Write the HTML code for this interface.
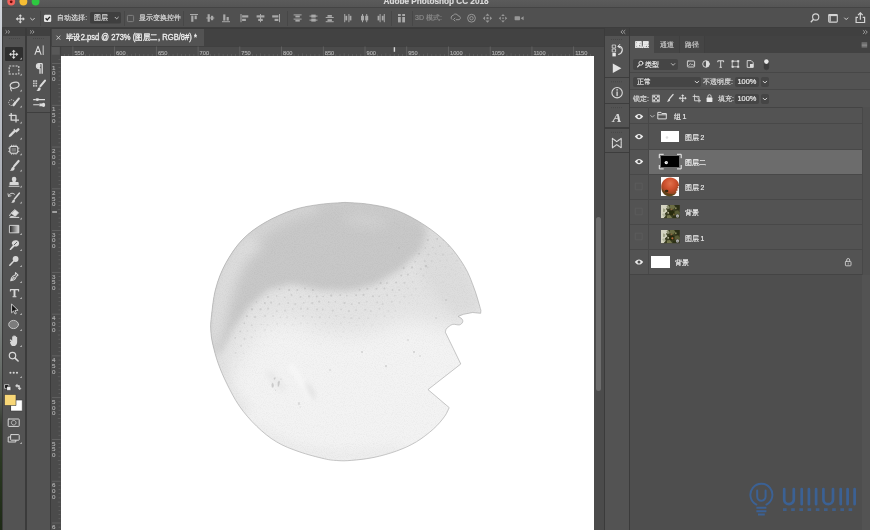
<!DOCTYPE html>
<html lang="zh">
<head>
<meta charset="utf-8">
<title>Adobe Photoshop CC 2018</title>
<style>
*{margin:0;padding:0;box-sizing:border-box}
html,body{width:870px;height:530px;overflow:hidden;background:#535353}
body{font-family:"Liberation Sans",sans-serif;font-size:7px;color:#d8d8d8;position:relative;line-height:1}
.a{position:absolute}
.t{position:absolute;white-space:nowrap;line-height:10px;height:10px;opacity:.999;will-change:opacity;-webkit-text-stroke:.18px currentColor}
svg{position:absolute;overflow:visible}
.t i{display:inline-block;width:1em;text-align:center;font-style:normal}
.rl{font-size:5.7px;color:#b0b0b0;line-height:8px;height:8px;-webkit-text-stroke:.15px #b0b0b0}
.rv{font-size:6.2px;color:#b0b0b0;line-height:6px;height:6px;-webkit-text-stroke:.15px #b0b0b0}
/* ---------- frame ---------- */
#deskL{left:0;top:0;width:2px;height:530px;background:linear-gradient(#d2d6dc 0,#c6cad1 60px,#a8acb4 200px,#7c8280 320px,#5a5f5a 395px,#343b30 425px,#2a3822 460px,#1e2a16 530px)}
#titlebar{left:2px;top:0;width:868px;height:8px;background:linear-gradient(#5b5b5b,#545454)}
#titleline{left:2px;top:7px;width:868px;height:1px;background:#444}
#optbar{left:2px;top:8px;width:868px;height:20px;background:#505050}
#optline{left:2px;top:27px;width:868px;height:1px;background:#3d3d3d}
#well{left:1.5px;top:28px;width:868px;height:502px;background:#3b3b3b}
/* left tool columns */
#tc1h{left:3px;top:28px;width:22px;height:8px;background:#404040}
#tc1{left:3px;top:36px;width:22px;height:494px;background:#535353}
#tc2h{left:27px;top:28px;width:22.6px;height:8px;background:#404040}
#tc2{left:27px;top:36px;width:22.6px;height:494px;background:#535353}
#tc2line{left:27px;top:112px;width:22.6px;height:1px;background:#3e3e3e}
/* document */
#tabstrip{left:51.3px;top:28.500px;width:552.7px;height:17.500px;background:#424242}
#tab{left:51.600px;top:28.700px;width:152.900px;height:17.300px;background:#535353}
#hruler{left:51.3px;top:46px;width:552.7px;height:10px;background:#4b4b4b}
#vruler{left:51.3px;top:56px;width:9.7px;height:474px;background:#4b4b4b}
#canvas{left:61px;top:56px;width:533px;height:474px;background:#fff}
#vscroll{left:594px;top:56px;width:10px;height:474px;background:#4b4b4b}
#vthumb{left:596px;top:217px;width:5px;height:174px;background:#6c6c6c;border-radius:2.5px}
/* right icon column */
#ich{left:605px;top:28px;width:24px;height:8px;background:#404040}
#ic{left:605px;top:36px;width:24px;height:494px;background:#535353}
.icsep{left:605px;width:24px;height:1.600px;background:#3d3d3d}
/* layers panel */
#lph{left:630px;top:28px;width:240px;height:8px;background:#404040}
#lptabs{left:630px;top:36px;width:240px;height:17px;background:#424242}
#lptab{left:630px;top:36px;width:25px;height:17px;background:#535353}
#lp{left:630px;top:53px;width:240px;height:477px;background:#535353}
.hl{left:630px;width:240px;height:1px;background:#474747}
.dd{background:#454545;border-radius:2px}
.rowline{left:630px;width:232px;height:1px;background:#484848}
#eyecol{left:648px;top:107px;width:1px;height:167px;background:#484848}
#sel{left:648.5px;top:149px;width:213px;height:24.5px;background:#6c6c6c}
#lscroll{left:862px;top:107px;width:8px;height:168px;background:#505050}
.thumb{position:absolute;background:#fff}
.eyebox{position:absolute;width:7px;height:7px;border:1px solid #5f5f5f}
</style>
</head>
<body>
<!-- frame -->
<div class="a" id="well"></div>
<div class="a" id="deskL"></div>
<div class="a" id="titlebar"></div>
<div class="a" id="titleline"></div>
<div class="a" id="optbar"></div>
<div class="a" id="optline"></div>

<!-- title -->
<div class="a" id="titlewrap" style="left:380px;top:0;width:112px;height:7.500px;overflow:hidden">
  <div class="t" style="left:3.5px;top:-3px;font-size:8.2px;font-weight:bold;color:#dcdcdc;letter-spacing:0">Adobe Photoshop CC 2018</div>
</div>
<!-- traffic lights -->
<svg class="a" style="left:0;top:0" width="50" height="8" viewBox="0 0 50 8">
  <circle cx="11.2" cy="1.6" r="3.9" fill="#f2635c"/><circle cx="11.2" cy="1.8" r="1.4" fill="#6e0b08"/>
  <circle cx="23.4" cy="1.6" r="3.9" fill="#f6bd34"/>
  <circle cx="35.6" cy="1.6" r="3.9" fill="#2dc840"/>
</svg>

<!-- tool columns -->
<div class="a" id="tc1h"></div><div class="a" id="tc1"></div>
<div class="a" id="tc2h"></div><div class="a" id="tc2"></div><div class="a" id="tc2line"></div>


<!-- tools column 1 -->
<svg style="left:0;top:28px" width="60" height="8" viewBox="0 28 60 8" fill="none" stroke="#b4b4b4" stroke-width=".8"><path d="M5.600 30.300l1.700 1.600-1.700 1.600M8 30.300l1.700 1.600-1.700 1.600M30 30.300l1.700 1.600-1.700 1.600M32.400 30.300l1.700 1.600-1.700 1.600"/></svg>
<div class="a" style="left:8.500px;top:38.400px;width:11px;height:1px;background:repeating-linear-gradient(90deg,#474747 0 1px,transparent 1px 2px)"></div>
<div class="a" style="left:32.500px;top:38.400px;width:11px;height:1px;background:repeating-linear-gradient(90deg,#474747 0 1px,transparent 1px 2px)"></div>
<div class="a" style="left:4.600px;top:47px;width:18.200px;height:13.600px;background:#2f2f2f;border-radius:1px"></div>
<svg style="left:3px;top:36px" width="22" height="420" viewBox="3 36 22 420" fill="none" stroke="#d8d8d8" stroke-width="1" stroke-linecap="round" stroke-linejoin="round">
  <!-- move y=54 -->
  <g transform="translate(13.700 54.300) scale(.86) translate(-14 -54)"><path fill="#e2e2e2" stroke="none" d="M14 48.600l2.200 2.500h-1.600v2.300h2.300v-1.600l2.500 2.200-2.500 2.200v-1.600h-2.300v2.300h1.600l-2.200 2.500-2.200-2.500h1.600v-2.300h-2.300v1.600l-2.500-2.200 2.500-2.200v1.600h2.300v-2.300h-1.600z"/></g>
  <!-- marquee y=70 -->
  <rect x="9.200" y="66" width="9.600" height="8" stroke-dasharray="2 1.200" stroke-linecap="butt" stroke-width="1.100"/>
  <!-- lasso y=86 -->
  <ellipse cx="14.600" cy="85.200" rx="4.500" ry="2.900" transform="rotate(-16 14.600 85.200)" stroke-width="1.250"/><path d="M11 87.400c-.9 1-.4 2.200.4 3.400" stroke-width="1.100"/>
  <!-- quick selection y=102 -->
  <circle cx="11.600" cy="102.600" r="2.900" stroke-dasharray="1.200 .9" stroke-linecap="butt" stroke-width=".9"/><path d="M18.900 98.500l-3.400 4.200" stroke-width="2"/><path d="M15 103.200l-1.400 1.800" stroke-width="2.400"/>
  <!-- crop y=117.5 -->
  <path d="M11.200 113v7.200h7.800M8.800 115.400h7.200v7" stroke-width="1.300" stroke-linecap="butt"/>
  <!-- eyedropper y=133.500 -->
  <path d="M16.400 131.700l-2.200-2.200M15.200 131.300l-4.700 4.700-1.200.4.400-1.200 4.700-4.700" stroke-width="1.200"/><path d="M18.300 129.300l-1.900 1.900" stroke-width="2.500"/>
  <!-- patch y=150.500 -->
  <rect x="9.800" y="146.400" width="8" height="6.800" rx="1.700" stroke-width="1.150"/><rect x="11.600" y="148" width="4.400" height="3.600" fill="#8c8c8c" stroke="none" opacity=".7"/><path d="M11.600 145.200v.8M13.800 145.200v.8M16 145.200v.8M11.600 153.600v.8M13.800 153.600v.8M16 153.600v.8M8.600 148.200h.8M8.600 151.400h.8M18.200 148.200h.8M18.200 151.400h.8" stroke-width=".8"/>
  <!-- brush y=166 -->
  <path d="M18.600 161l-4.600 5.400" stroke-width="2.200"/><path d="M13.400 166.800c-1.100.2-2 1-2.200 2.300-.2.800-.7 1.200-1.400 1.300 1.700.9 3.900.4 4.700-1.200.4-.9.100-1.900-1.100-2.400z" fill="#d8d8d8" stroke="none"/>
  <!-- stamp y=182 -->
  <g transform="translate(0 -1.100)"><path d="M9.200 187.400h9.800" stroke-width="1.100"/><path fill="#d8d8d8" stroke="none" d="M9.500 186v-1.900c0-.5.400-.9.900-.9h2.300c-.2-1.200-.9-1.800-.9-3a2.300 2.300 0 0 1 4.600 0c0 1.200-.7 1.800-.9 3h2.300c.5 0 .9.400.9.900v1.900z"/></g>
  <!-- history brush y=198 -->
  <path d="M19.300 193.200l-4.800 5.800" stroke-width="1.600"/><path d="M14 199.400c-1.100.3-1.600 1-1.800 2-.2.700-.6 1-1.200 1.200 1.500.6 3.200.2 3.800-1.200.4-.8.100-1.600-.8-2z" fill="#d8d8d8" stroke="none"/><path d="M8.600 196.200a3.600 3.600 0 0 1 6-2" stroke-width=".9"/><path d="M8 193.800l.5 2.600 2.500-.6" stroke-width=".9"/>
  <!-- eraser y=213.500 -->
  <path d="M15 209.800l3.600 3-3.400 3.600-3.800-3.200z" fill="#dedede" stroke-width=".8"/><path d="M11.400 213.200l-2 2 1.400 1.400h2.600l1.800-1.400" stroke-width="1"/><path d="M10 217.400h8.800" stroke-width="1"/>
  <!-- gradient y=229 -->
  <rect x="9.800" y="225.400" width="9" height="7.400" fill="url(#gradTool)" stroke-width=".9"/>
  <!-- smudge y=245 -->
  <path d="M17.400 240.600c-2.200-.9-4.600-.2-5.400 1.600-.5 1.200 0 2.300 1 2.800l-3.200 4c-.5.700.4 1.500 1.100.9l3.800-3.600c1.600.7 3.500-.1 4.200-1.900.6-1.500 0-3.200-1.500-3.800z" fill="#d8d8d8" stroke="none"/><path d="M14.200 244.800l2.600-2.600" stroke="#535353" stroke-width=".9"/>
  <!-- dodge y=261 -->
  <circle cx="15.600" cy="259" r="2.900" fill="#d8d8d8" stroke="none"/><path d="M13.600 261.300l-3.800 4" stroke-width="1.500"/>
  <!-- pen y=277 -->
  <g transform="translate(14.400 277) scale(.8) translate(-14.800 -277.200)"><path d="M16.200 271.600l3.200 3.200-2 1.400c-.6 2.200-1.600 3.700-3.600 4.700l-3.600 1 1-3.600c1-2 2.500-3 4.700-3.600zM10.400 281.700l3.400-3.400" stroke-width="1.300"/><circle cx="14.300" cy="277.800" r=".9" fill="#d8d8d8" stroke="none"/></g>
  <!-- T y=293 -->
  <path d="M10.400 291.400v-1.800h8.200v1.800" stroke-width="1.100" stroke-linecap="butt"/><path d="M14.500 289.800v6.600" stroke-width="1.900" stroke-linecap="butt"/><path d="M12.600 296.700h3.800" stroke-width="1.100" stroke-linecap="butt"/>
  <!-- path select y=309 -->
  <path d="M11.600 304.400v8.400l2-1.900 1.400 3.100 1.300-.6-1.400-3.100h2.800z" fill="#141414" stroke="#e6e6e6" stroke-width=".8"/>
  <!-- ellipse y=325 -->
  <ellipse cx="13.600" cy="324.500" rx="4.900" ry="4.100" fill="#7c7c7c" stroke="#c4c4c4" stroke-width="1"/>
  <!-- hand y=341 -->
  <g transform="translate(14.200 341) scale(.92) translate(-13.500 -341)"><path d="M10.200 342.200l-1.300-1.700c-.6-.8.400-1.700 1.200-1l1.200 1.100v-4.100c0-1 1.300-1 1.300 0v-1c0-1 1.400-1 1.400 0v.5c0-1 1.400-1 1.400 0v1c0-.9 1.300-.9 1.300 0v5c0 2-1 3.600-2.400 4.300h-3.200c-1-.6-1.600-1.800-2.200-4.100z" fill="#d8d8d8" stroke="none"/></g>
  <!-- zoom y=357 -->
  <circle cx="12.500" cy="355.600" r="3.200" stroke-width="1.200"/><path d="M15 358.200l3.100 2.800" stroke-width="1.600"/>
  <!-- dots y=373 -->
  <g fill="#d8d8d8" stroke="none"><circle cx="10.400" cy="372.700" r="1.050"/><circle cx="13.700" cy="372.700" r="1.050"/><circle cx="17" cy="372.700" r="1.050"/></g>
  <!-- flyout triangles -->
  <g fill="#bdbdbd" stroke="none">
    <path d="M21.800 57.6v2h-2z"/><path d="M21.800 73.6v2h-2z"/><path d="M21.800 89.6v2h-2z"/><path d="M21.800 105.6v2h-2z"/><path d="M21.800 121.6v2h-2z"/><path d="M21.800 137.6v2h-2z"/><path d="M21.800 153.2v2h-2z"/><path d="M21.800 169.6v2h-2z"/><path d="M21.800 185.6v2h-2z"/><path d="M21.800 201.6v2h-2z"/><path d="M21.800 217.6v2h-2z"/><path d="M21.800 233.0v2h-2z"/><path d="M21.800 249.0v2h-2z"/><path d="M21.800 265.0v2h-2z"/><path d="M21.800 281.0v2h-2z"/><path d="M21.800 297.0v2h-2z"/><path d="M21.800 313.0v2h-2z"/><path d="M21.800 329.0v2h-2z"/><path d="M21.800 345.0v2h-2z"/><path d="M21.800 376.0v2h-2z"/><path d="M21.800 442.0v2h-2z"/>
  </g>
  <!-- default colors / swap -->
  <rect x="5" y="384.600" width="3.800" height="3.800" fill="#111" stroke="#e0e0e0" stroke-width=".7"/><rect x="7" y="386.600" width="3.800" height="3.800" fill="#f0f0f0" stroke="#333" stroke-width=".5"/>
  <path d="M16.800 385.600h2.600v3M15.800 385.600l1.400-1.200v2.400zM19.400 389.600l-1.200-1.400h2.400z" stroke-width=".8" fill="#d8d8d8"/>
  <!-- bg / fg swatches -->
  <rect x="11" y="400" width="11.300" height="11" fill="#ffffff" stroke="#3a3a3a" stroke-width=".6"/>
  <rect x="4.700" y="394.500" width="11.300" height="11" fill="#f8d777" stroke="#3a3a3a" stroke-width=".6"/>
  <!-- quick mask -->
  <rect x="8.200" y="419" width="11" height="7.400" rx=".6" stroke-width="1"/><circle cx="13.700" cy="422.700" r="2.300" stroke-width=".8" stroke-dasharray="1 .8"/>
  <!-- screen mode -->
  <rect x="10.600" y="434.600" width="8.600" height="5.600" rx=".6" stroke-width="1"/><path d="M10.400 437h-2.200v5h7.600v-1.600" stroke-width="1"/>
</svg>
<svg width="0" height="0" style="left:0;top:0"><defs><linearGradient id="gradTool" x1="0" x2="1" y1="0" y2="0"><stop offset="0" stop-color="#2a2a2a"/><stop offset="1" stop-color="#d8d8d8"/></linearGradient></defs></svg>

<!-- tools column 2 -->
<svg style="left:27px;top:36px" width="23" height="80" viewBox="27 36 23 80" fill="none" stroke="#dcdcdc" stroke-width="1" stroke-linecap="round" stroke-linejoin="round">
  <path d="M35 54.400l3-8.200 3 8.200M36.100 51.600h3.800" stroke-width="1.100"/><path d="M43.200 45.400v9.600" stroke-width=".9" stroke-linecap="butt"/>
  <path d="M42.200 63.600h-3.200a2.500 2.500 0 0 0 0 5h1v5.200M42.200 63.600v10.200" stroke-width="1.300" stroke-linecap="butt"/><rect x="37" y="63.600" width="3.400" height="4.600" fill="#dcdcdc" stroke="none" rx="1.600"/>
  <g fill="#c4c4c4" stroke="none"><rect x="33" y="80.200" width="1.700" height="1.700"/><rect x="35.400" y="80.200" width="1.700" height="1.700"/><rect x="33" y="82.600" width="1.700" height="1.700"/><rect x="35.400" y="82.600" width="1.700" height="1.700"/><rect x="33" y="85" width="1.700" height="1.700"/><rect x="35.400" y="85" width="1.700" height="1.700"/></g>
  <path d="M45 80.600l-4.600 5.600" stroke-width="2.100"/><path d="M39.600 87.200c-1 .2-1.800 1-2 2.200-.2.800-.7 1.200-1.400 1.300 1.600.8 3.600.3 4.300-1.200.4-.9.100-1.800-.9-2.300z" fill="#dcdcdc" stroke="none"/>
  <path d="M33.200 99.600h2.400M39 99.600h6M33.200 104.800h6M42.600 104.800h2.400" stroke-width="1.100" stroke-linecap="butt"/><ellipse cx="37.300" cy="99.600" rx="1.900" ry="1.300" fill="#dcdcdc" stroke="none"/><path d="M39.400 103.600h2.600l1.300 1.200v.2l-1.300 1.200h-2.600z" fill="#dcdcdc" stroke="none"/><ellipse cx="43.500" cy="104.900" rx="1.700" ry="2.100" fill="#dcdcdc" stroke="none"/>
</svg>

<!-- document -->
<div class="a" id="tabstrip"></div>
<div class="a" id="tab"></div>
<div class="a" id="hruler"></div>
<div class="a" id="vruler"></div>
<div class="a" id="canvas"></div>

<!-- canvas artwork -->
<svg style="left:61px;top:56px" width="533" height="474" viewBox="61 56 533 474">
  <defs>
    <clipPath id="orangeClip"><path d="M345 202.4C348.9 202.7 359.7 202.9 368.3 204.2C376.9 205.5 387.2 206.9 396.6 210.4C406.1 213.9 416.5 219.8 425.0 225.4C433.5 231.0 441.0 237.0 447.6 243.8C454.2 250.6 460.0 258.9 464.5 266.4C469.0 273.9 471.7 281.7 474.4 289.0C477.1 296.3 479.8 306.8 480.9 310.3L480.7 313.3L472.6 312.5L463.4 314.3L458.1 316.4C458.8 316.8 461.2 318.0 462.0 319.0C462.8 320.0 463.0 321.2 462.6 322.2C462.2 323.2 461.0 324.5 459.4 324.9C457.8 325.2 454.6 324.0 452.8 324.3C451.1 324.6 450.0 325.7 448.9 326.5C447.8 327.3 446.8 328.1 446.2 329.1C445.6 330.1 445.5 331.8 445.4 332.3L460.8 364L428 389.6L449.2 407.6C448.4 409.1 447.3 412.7 444.7 416.3C442.1 419.9 438.1 424.8 433.4 429.0C428.7 433.2 422.5 438.1 416.4 441.8C410.3 445.5 403.7 448.4 396.6 451.0C389.5 453.6 381.6 455.8 374.0 457.4C366.4 459.0 357.3 459.9 351.3 460.4C345.3 460.9 342.5 460.9 338.0 460.6C333.5 460.3 331.0 460.3 324.5 458.8C318.0 457.3 307.0 454.5 299.0 451.7C291.0 448.9 283.5 446.1 276.4 441.8C269.3 437.6 262.7 432.1 256.6 426.2C250.5 420.3 244.6 413.5 239.6 406.4C234.6 399.3 230.4 390.9 226.9 383.8C223.4 376.7 220.8 370.6 218.4 364.0C216.0 357.4 214.0 349.7 212.7 344.0C211.4 338.3 211.0 334.4 210.8 330.0C210.6 325.6 210.5 324.2 211.3 317.4C212.1 310.6 213.2 298.0 215.6 289.0C218.0 280.0 221.0 271.9 225.5 263.6C230.0 255.4 235.9 246.3 242.5 239.5C249.1 232.7 256.5 227.4 265.0 222.5C273.5 217.6 284.2 212.8 293.4 209.8C302.6 206.8 311.4 205.6 320.0 204.4C328.6 203.2 340.8 202.7 345.0 202.4Z"/></clipPath>
    <filter id="b12" x="-30%" y="-30%" width="160%" height="160%"><feGaussianBlur stdDeviation="11"/></filter>
    <filter id="b6" x="-30%" y="-30%" width="160%" height="160%"><feGaussianBlur stdDeviation="6"/></filter>
    <filter id="b4" x="-30%" y="-30%" width="160%" height="160%"><feGaussianBlur stdDeviation="3.800"/></filter>
    <filter id="b05" x="-5%" y="-5%" width="110%" height="110%"><feGaussianBlur stdDeviation=".45"/></filter>
    <filter id="b3" x="-30%" y="-30%" width="160%" height="160%"><feGaussianBlur stdDeviation="2.500"/></filter>
    <filter id="grain" x="0" y="0" width="100%" height="100%">
      <feTurbulence type="fractalNoise" baseFrequency="0.9" numOctaves="2" seed="7" result="n"/>
      <feColorMatrix in="n" type="matrix" values="0 0 0 0 0  0 0 0 0 0  0 0 0 0 0  1.4 0 0 0 -0.55"/>
    </filter>
  </defs>
  <g clip-path="url(#orangeClip)">
    <rect x="200" y="195" width="300" height="275" fill="#f3f3f3"/>
    <!-- dark upper band -->
    <g filter="url(#b12)">
      <path d="M196 380L196 300L212 250L240 215L320 188L400 190L450 220L480 270L492 318L455 330L430 322L405 318L380 328L350 334L318 330L290 318L266 322L248 340L236 362L224 384Z" fill="#e3e3e3" opacity=".95"/>
    </g>
    <g filter="url(#b6)">
      <path d="M412 208L452 240L474 284L484 312L456 316L436 298L420 272L416 240Z" fill="#dcdcdc" opacity=".85"/>
    </g>
    <g filter="url(#b4)">
      <path d="M200 356L200 300L212 258L238 226L268 206L320 192L385 194L418 210L427 230L421 250L401 269L374 285L348 291L320 290L292 284L268 290L249 307L233 329L221 352Z" fill="#c8c8c8"/>
    </g>
    <g filter="url(#b6)">
      <!-- lighter streak upper-left -->
      <path d="M206 342L208 300L216 270L231 248L250 234L263 246L247 262L237 282L230 306L225 330L219 349Z" fill="#e3e3e3" opacity=".75"/>
      <path d="M228 246L246 228L268 214L296 203L318 200L318 213L298 218L274 230L256 244L244 258Z" fill="#e0e0e0" opacity=".5"/>
      <!-- top lighter patch -->
      <ellipse cx="366" cy="221" rx="22" ry="5" fill="#dedede" opacity=".55" transform="rotate(6 366 221)"/>
      <!-- rim -->
      <path d="M212 330C212 270 250 222 320 205C360 198 400 208 430 228" fill="none" stroke="#dadada" stroke-width="5" opacity=".4"/>
      <!-- lower-left rim shading -->
      <path d="M212 345C218 372 230 395 246 414" fill="none" stroke="#dcdcdc" stroke-width="9" opacity=".7"/>
      <path d="M250 425C290 455 340 464 400 450" fill="none" stroke="#e2e2e2" stroke-width="6" opacity=".7"/>
    </g>
    <!-- grain -->
    <rect x="200" y="195" width="300" height="275" fill="#a0a0a0" filter="url(#grain)" opacity=".05"/>
    <!-- stem dimple -->
    <g filter="url(#b3)">
      <ellipse cx="309.500" cy="391" rx="3.400" ry="9" fill="#dadada" opacity=".75" transform="rotate(-30 309.500 391)"/>
      <path d="M290 365C298 375 305 388 310 400" stroke="#fbfbfb" stroke-width="4" fill="none" opacity=".8"/>
      <path d="M268 372L284 390" stroke="#e4e4e4" stroke-width="7" fill="none" opacity=".6"/>
    </g>
    <g fill="#c4c4c4" opacity=".85">
      <path d="M273.500 378.500l1.600-1.500.6 1.200-1.400 1.800zM271.500 384l1.400-1.600 1 3-.8 2.600-1.400-1zM277.600 382.500l1.400-2 1 1.200-1 4.600-1.200.5zM275 389.500l1.200.5-.6 1.300zM280 379l1.200-.6.300 1.500z"/>
      <path d="M298.300 402.500l1.100-.5.300 2.400-1.200.7zM299.500 407l.9-.6v1.500z"/>
    </g>
    <!-- small pores -->
    <g fill="#b4b4b4" filter="url(#b05)" opacity=".72">
    <circle cx="240.3" cy="331.4" r="0.95" opacity="0.65"/>
    <circle cx="235.2" cy="337.9" r="0.79" opacity="0.66"/>
    <circle cx="241.1" cy="346.0" r="0.97" opacity="0.40"/>
    <circle cx="235.5" cy="353.1" r="0.98" opacity="0.41"/>
    <circle cx="241.0" cy="359.9" r="0.95" opacity="0.17"/>
    <circle cx="235.8" cy="366.3" r="0.92" opacity="0.19"/>
    <circle cx="246.9" cy="316.3" r="1.06" opacity="0.75"/>
    <circle cx="244.3" cy="323.3" r="0.88" opacity="0.69"/>
    <circle cx="247.2" cy="330.9" r="0.77" opacity="0.51"/>
    <circle cx="244.5" cy="339.0" r="1.13" opacity="0.43"/>
    <circle cx="248.6" cy="346.2" r="0.76" opacity="0.23"/>
    <circle cx="243.5" cy="353.2" r="1.06" opacity="0.23"/>
    <circle cx="247.8" cy="360.2" r="1.00" opacity="0.12"/>
    <circle cx="244.8" cy="365.5" r="0.83" opacity="0.12"/>
    <circle cx="256.5" cy="302.1" r="0.77" opacity="0.82"/>
    <circle cx="252.0" cy="309.3" r="1.15" opacity="0.77"/>
    <circle cx="255.0" cy="317.1" r="1.06" opacity="0.60"/>
    <circle cx="251.8" cy="325.3" r="0.94" opacity="0.52"/>
    <circle cx="255.3" cy="330.8" r="0.76" opacity="0.38"/>
    <circle cx="251.8" cy="337.3" r="1.11" opacity="0.32"/>
    <circle cx="256.9" cy="345.0" r="0.76" opacity="0.12"/>
    <circle cx="251.4" cy="351.3" r="0.83" opacity="0.12"/>
    <circle cx="264.8" cy="303.1" r="1.01" opacity="0.69"/>
    <circle cx="260.5" cy="309.4" r="1.12" opacity="0.65"/>
    <circle cx="265.2" cy="315.9" r="1.14" opacity="0.47"/>
    <circle cx="261.2" cy="324.4" r="0.77" opacity="0.39"/>
    <circle cx="265.0" cy="330.0" r="1.14" opacity="0.25"/>
    <circle cx="260.4" cy="336.9" r="0.82" opacity="0.20"/>
    <circle cx="264.4" cy="345.2" r="1.05" opacity="0.12"/>
    <circle cx="268.0" cy="296.9" r="0.99" opacity="0.74"/>
    <circle cx="271.1" cy="302.6" r="1.06" opacity="0.63"/>
    <circle cx="268.1" cy="308.7" r="1.09" opacity="0.55"/>
    <circle cx="272.9" cy="315.9" r="0.97" opacity="0.41"/>
    <circle cx="267.7" cy="324.7" r="0.87" opacity="0.29"/>
    <circle cx="271.3" cy="331.0" r="1.14" opacity="0.18"/>
    <circle cx="266.9" cy="337.0" r="1.00" opacity="0.12"/>
    <circle cx="279.5" cy="289.1" r="0.94" opacity="0.82"/>
    <circle cx="276.6" cy="296.0" r="0.78" opacity="0.72"/>
    <circle cx="279.3" cy="303.9" r="0.89" opacity="0.58"/>
    <circle cx="276.7" cy="311.3" r="1.00" opacity="0.47"/>
    <circle cx="280.5" cy="317.3" r="0.88" opacity="0.36"/>
    <circle cx="277.1" cy="323.9" r="1.11" opacity="0.27"/>
    <circle cx="279.5" cy="332.0" r="1.06" opacity="0.13"/>
    <circle cx="276.3" cy="337.8" r="0.81" opacity="0.12"/>
    <circle cx="289.2" cy="289.9" r="1.07" opacity="0.77"/>
    <circle cx="284.8" cy="297.2" r="0.81" opacity="0.67"/>
    <circle cx="288.2" cy="303.0" r="0.98" opacity="0.56"/>
    <circle cx="285.1" cy="310.7" r="1.14" opacity="0.45"/>
    <circle cx="287.0" cy="317.4" r="1.02" opacity="0.33"/>
    <circle cx="284.6" cy="324.3" r="1.08" opacity="0.23"/>
    <circle cx="287.5" cy="332.1" r="0.91" opacity="0.12"/>
    <circle cx="284.3" cy="339.0" r="1.03" opacity="0.12"/>
    <circle cx="297.3" cy="290.1" r="0.99" opacity="0.77"/>
    <circle cx="291.5" cy="294.9" r="0.85" opacity="0.68"/>
    <circle cx="295.3" cy="304.1" r="1.11" opacity="0.54"/>
    <circle cx="292.7" cy="309.1" r="0.85" opacity="0.45"/>
    <circle cx="295.5" cy="318.2" r="0.82" opacity="0.31"/>
    <circle cx="292.8" cy="324.5" r="0.97" opacity="0.20"/>
    <circle cx="297.2" cy="330.4" r="0.96" opacity="0.12"/>
    <circle cx="291.1" cy="337.0" r="0.76" opacity="0.12"/>
    <circle cx="305.0" cy="288.4" r="0.91" opacity="0.82"/>
    <circle cx="300.5" cy="296.9" r="0.88" opacity="0.67"/>
    <circle cx="303.7" cy="302.8" r="0.76" opacity="0.59"/>
    <circle cx="301.0" cy="308.7" r="1.13" opacity="0.48"/>
    <circle cx="303.1" cy="316.1" r="1.09" opacity="0.37"/>
    <circle cx="300.8" cy="323.3" r="0.97" opacity="0.25"/>
    <circle cx="303.9" cy="331.6" r="0.82" opacity="0.12"/>
    <circle cx="300.8" cy="339.3" r="1.03" opacity="0.12"/>
    <circle cx="312.9" cy="290.0" r="1.11" opacity="0.83"/>
    <circle cx="309.0" cy="296.4" r="1.03" opacity="0.71"/>
    <circle cx="312.3" cy="303.1" r="1.14" opacity="0.61"/>
    <circle cx="307.6" cy="308.9" r="1.04" opacity="0.50"/>
    <circle cx="312.0" cy="317.1" r="0.99" opacity="0.38"/>
    <circle cx="307.3" cy="323.2" r="0.78" opacity="0.27"/>
    <circle cx="312.7" cy="332.1" r="1.03" opacity="0.15"/>
    <circle cx="307.0" cy="339.2" r="1.08" opacity="0.12"/>
    <circle cx="316.8" cy="296.5" r="0.92" opacity="0.73"/>
    <circle cx="319.2" cy="301.7" r="1.10" opacity="0.66"/>
    <circle cx="317.1" cy="309.4" r="1.05" opacity="0.53"/>
    <circle cx="319.8" cy="317.3" r="1.09" opacity="0.41"/>
    <circle cx="315.5" cy="324.3" r="0.85" opacity="0.28"/>
    <circle cx="320.0" cy="329.8" r="0.86" opacity="0.21"/>
    <circle cx="315.4" cy="339.1" r="0.80" opacity="0.12"/>
    <circle cx="320.7" cy="343.9" r="1.14" opacity="0.12"/>
    <circle cx="323.2" cy="296.6" r="0.76" opacity="0.75"/>
    <circle cx="328.7" cy="302.2" r="0.83" opacity="0.66"/>
    <circle cx="322.8" cy="309.5" r="0.88" opacity="0.54"/>
    <circle cx="329.3" cy="317.3" r="0.90" opacity="0.42"/>
    <circle cx="325.3" cy="323.1" r="0.84" opacity="0.32"/>
    <circle cx="329.2" cy="332.2" r="1.02" opacity="0.18"/>
    <circle cx="325.2" cy="336.8" r="1.11" opacity="0.12"/>
    <circle cx="331.2" cy="295.6" r="1.14" opacity="0.77"/>
    <circle cx="335.3" cy="301.8" r="0.83" opacity="0.67"/>
    <circle cx="332.8" cy="310.6" r="1.13" opacity="0.53"/>
    <circle cx="336.0" cy="315.8" r="0.87" opacity="0.44"/>
    <circle cx="332.6" cy="323.7" r="0.81" opacity="0.31"/>
    <circle cx="335.7" cy="330.9" r="0.89" opacity="0.20"/>
    <circle cx="331.9" cy="337.1" r="0.76" opacity="0.12"/>
    <circle cx="340.3" cy="295.1" r="0.89" opacity="0.78"/>
    <circle cx="344.5" cy="303.1" r="1.13" opacity="0.65"/>
    <circle cx="341.1" cy="309.4" r="0.88" opacity="0.55"/>
    <circle cx="344.1" cy="317.1" r="0.90" opacity="0.43"/>
    <circle cx="340.9" cy="323.2" r="0.94" opacity="0.33"/>
    <circle cx="343.0" cy="332.0" r="0.99" opacity="0.19"/>
    <circle cx="341.3" cy="337.1" r="1.03" opacity="0.12"/>
    <circle cx="344.3" cy="343.8" r="1.08" opacity="0.12"/>
    <circle cx="346.9" cy="295.8" r="0.78" opacity="0.77"/>
    <circle cx="351.8" cy="304.1" r="0.86" opacity="0.62"/>
    <circle cx="348.9" cy="311.2" r="1.08" opacity="0.52"/>
    <circle cx="351.2" cy="318.1" r="1.12" opacity="0.40"/>
    <circle cx="349.3" cy="322.7" r="0.75" opacity="0.33"/>
    <circle cx="351.5" cy="331.0" r="0.92" opacity="0.19"/>
    <circle cx="346.9" cy="338.4" r="1.02" opacity="0.12"/>
    <circle cx="359.6" cy="289.7" r="0.96" opacity="0.83"/>
    <circle cx="356.1" cy="295.3" r="1.00" opacity="0.75"/>
    <circle cx="359.1" cy="303.0" r="1.01" opacity="0.62"/>
    <circle cx="356.1" cy="310.2" r="0.98" opacity="0.51"/>
    <circle cx="359.2" cy="318.2" r="1.02" opacity="0.37"/>
    <circle cx="356.6" cy="325.2" r="0.93" opacity="0.27"/>
    <circle cx="359.6" cy="330.5" r="0.88" opacity="0.17"/>
    <circle cx="355.5" cy="337.5" r="0.83" opacity="0.12"/>
    <circle cx="367.3" cy="288.8" r="1.04" opacity="0.81"/>
    <circle cx="363.5" cy="294.9" r="1.07" opacity="0.73"/>
    <circle cx="366.9" cy="301.8" r="0.75" opacity="0.60"/>
    <circle cx="365.3" cy="309.8" r="1.04" opacity="0.48"/>
    <circle cx="368.2" cy="318.2" r="0.89" opacity="0.34"/>
    <circle cx="363.6" cy="324.5" r="0.75" opacity="0.25"/>
    <circle cx="367.6" cy="331.7" r="0.98" opacity="0.12"/>
    <circle cx="364.0" cy="339.1" r="0.92" opacity="0.12"/>
    <circle cx="376.5" cy="288.8" r="1.04" opacity="0.76"/>
    <circle cx="373.0" cy="296.2" r="1.00" opacity="0.67"/>
    <circle cx="377.1" cy="302.4" r="0.88" opacity="0.54"/>
    <circle cx="370.8" cy="311.0" r="1.00" opacity="0.44"/>
    <circle cx="376.4" cy="316.3" r="0.82" opacity="0.32"/>
    <circle cx="371.9" cy="325.0" r="0.89" opacity="0.21"/>
    <circle cx="375.8" cy="330.8" r="1.09" opacity="0.12"/>
    <circle cx="371.0" cy="339.0" r="0.75" opacity="0.12"/>
    <circle cx="380.7" cy="283.0" r="1.05" opacity="0.82"/>
    <circle cx="384.4" cy="288.4" r="1.00" opacity="0.70"/>
    <circle cx="379.2" cy="296.4" r="0.82" opacity="0.62"/>
    <circle cx="382.7" cy="304.2" r="1.10" opacity="0.46"/>
    <circle cx="379.5" cy="308.8" r="1.08" opacity="0.41"/>
    <circle cx="384.7" cy="316.1" r="1.08" opacity="0.25"/>
    <circle cx="380.9" cy="324.2" r="0.86" opacity="0.15"/>
    <circle cx="382.8" cy="329.9" r="0.93" opacity="0.12"/>
    <circle cx="386.9" cy="282.9" r="0.89" opacity="0.76"/>
    <circle cx="392.5" cy="290.0" r="0.90" opacity="0.59"/>
    <circle cx="387.2" cy="295.3" r="0.95" opacity="0.56"/>
    <circle cx="391.7" cy="301.9" r="1.09" opacity="0.41"/>
    <circle cx="388.4" cy="311.0" r="1.09" opacity="0.29"/>
    <circle cx="392.6" cy="317.8" r="1.03" opacity="0.14"/>
    <circle cx="387.8" cy="324.8" r="1.12" opacity="0.12"/>
    <circle cx="401.2" cy="275.5" r="0.91" opacity="0.74"/>
    <circle cx="396.1" cy="282.4" r="1.00" opacity="0.68"/>
    <circle cx="399.2" cy="290.0" r="0.97" opacity="0.53"/>
    <circle cx="394.9" cy="295.5" r="0.78" opacity="0.48"/>
    <circle cx="399.9" cy="301.9" r="0.96" opacity="0.33"/>
    <circle cx="395.4" cy="310.9" r="1.06" opacity="0.23"/>
    <circle cx="399.2" cy="317.8" r="0.98" opacity="0.12"/>
    <circle cx="395.4" cy="325.1" r="0.75" opacity="0.12"/>
    <circle cx="403.6" cy="268.0" r="1.08" opacity="0.82"/>
    <circle cx="407.9" cy="274.6" r="1.12" opacity="0.66"/>
    <circle cx="404.5" cy="282.7" r="1.07" opacity="0.58"/>
    <circle cx="408.0" cy="288.4" r="0.79" opacity="0.43"/>
    <circle cx="404.4" cy="296.6" r="1.11" opacity="0.35"/>
    <circle cx="409.1" cy="303.0" r="0.95" opacity="0.18"/>
    <circle cx="405.2" cy="308.9" r="0.90" opacity="0.14"/>
    <circle cx="415.2" cy="261.8" r="0.76" opacity="0.75"/>
    <circle cx="412.0" cy="267.4" r="1.06" opacity="0.71"/>
    <circle cx="416.7" cy="274.0" r="0.77" opacity="0.53"/>
    <circle cx="412.6" cy="281.8" r="0.90" opacity="0.47"/>
    <circle cx="415.6" cy="288.7" r="0.98" opacity="0.31"/>
    <circle cx="411.7" cy="295.0" r="0.94" opacity="0.27"/>
    <circle cx="417.3" cy="303.7" r="1.04" opacity="0.12"/>
    <circle cx="413.1" cy="309.9" r="0.89" opacity="0.12"/>
    <circle cx="425.3" cy="248.1" r="0.76" opacity="0.74"/>
    <circle cx="419.1" cy="253.8" r="1.07" opacity="0.82"/>
    <circle cx="424.8" cy="261.1" r="1.12" opacity="0.55"/>
    <circle cx="420.8" cy="269.0" r="1.00" opacity="0.55"/>
    <circle cx="423.4" cy="275.6" r="1.04" opacity="0.36"/>
    <circle cx="421.1" cy="281.1" r="0.76" opacity="0.34"/>
    <circle cx="423.6" cy="288.4" r="0.90" opacity="0.15"/>
    <circle cx="418.9" cy="296.3" r="0.92" opacity="0.14"/>
    <circle cx="427.8" cy="240.0" r="1.01" opacity="0.79"/>
    <circle cx="432.9" cy="247.5" r="0.87" opacity="0.59"/>
    <circle cx="428.4" cy="254.5" r="1.11" opacity="0.54"/>
    <circle cx="431.7" cy="261.1" r="1.05" opacity="0.38"/>
    <circle cx="427.6" cy="267.5" r="1.00" opacity="0.36"/>
    <circle cx="431.7" cy="275.9" r="0.89" opacity="0.14"/>
    <circle cx="427.3" cy="282.3" r="0.99" opacity="0.13"/>
    <circle cx="437.2" cy="238.9" r="0.95" opacity="0.72"/>
    <circle cx="439.9" cy="246.1" r="0.89" opacity="0.59"/>
    <circle cx="435.6" cy="253.6" r="0.97" opacity="0.48"/>
    <circle cx="440.1" cy="260.9" r="0.93" opacity="0.35"/>
    <circle cx="436.3" cy="268.0" r="0.80" opacity="0.25"/>
    <circle cx="440.4" cy="274.8" r="1.09" opacity="0.13"/>
    <circle cx="435.0" cy="282.1" r="0.87" opacity="0.12"/>
    <circle cx="443.5" cy="239.8" r="1.04" opacity="0.68"/>
    <circle cx="448.6" cy="246.2" r="0.82" opacity="0.56"/>
    <circle cx="442.9" cy="254.6" r="1.08" opacity="0.44"/>
    <circle cx="446.9" cy="260.1" r="0.81" opacity="0.34"/>
    <circle cx="445.3" cy="266.9" r="0.98" opacity="0.24"/>
    <circle cx="449.0" cy="274.1" r="1.02" opacity="0.12"/>
    <circle cx="443.6" cy="282.4" r="0.94" opacity="0.12"/>
    <circle cx="452.1" cy="240.9" r="0.95" opacity="0.64"/>
    <circle cx="456.2" cy="247.0" r="1.02" opacity="0.52"/>
    <circle cx="452.2" cy="253.7" r="0.86" opacity="0.43"/>
    <circle cx="456.9" cy="260.6" r="1.04" opacity="0.30"/>
    <circle cx="451.4" cy="269.3" r="0.84" opacity="0.18"/>
    <circle cx="455.8" cy="274.7" r="1.10" opacity="0.12"/>
    <circle cx="452.6" cy="281.4" r="0.85" opacity="0.12"/>
    <circle cx="461.0" cy="241.2" r="0.78" opacity="0.60"/>
    <circle cx="463.7" cy="246.9" r="0.86" opacity="0.50"/>
    <circle cx="461.0" cy="253.7" r="1.12" opacity="0.40"/>
    <circle cx="462.9" cy="260.9" r="1.00" opacity="0.28"/>
    <circle cx="460.7" cy="268.0" r="1.11" opacity="0.17"/>
    <circle cx="463.5" cy="274.6" r="0.83" opacity="0.12"/>
    <circle cx="466.9" cy="239.8" r="0.82" opacity="0.61"/>
    <circle cx="471.1" cy="246.9" r="1.06" opacity="0.48"/>
    <circle cx="467.0" cy="254.8" r="1.09" opacity="0.36"/>
    <circle cx="473.2" cy="261.7" r="0.83" opacity="0.23"/>
    <circle cx="468.6" cy="268.2" r="0.86" opacity="0.14"/>
    <circle cx="472.8" cy="274.6" r="1.09" opacity="0.12"/>
    <circle cx="426" cy="266" r="1.2" opacity=".8"/>
    <circle cx="399" cy="248" r="1.1" opacity=".8"/>
    <circle cx="414" cy="352" r="1.0" opacity=".8"/>
    <circle cx="420" cy="356" r="0.8" opacity=".8"/>
    <circle cx="408" cy="340" r="0.8" opacity=".8"/>
    <circle cx="386" cy="366" r="1.0" opacity=".8"/>
    <circle cx="362" cy="352" r="0.9" opacity=".8"/>
    <circle cx="330" cy="370" r="0.8" opacity=".8"/>
    <circle cx="446" cy="300" r="0.9" opacity=".8"/>
    <circle cx="436" cy="318" r="0.8" opacity=".8"/>
    </g>
  </g>
  <!-- edge line -->
  <path d="M345 202.4C348.9 202.7 359.7 202.9 368.3 204.2C376.9 205.5 387.2 206.9 396.6 210.4C406.1 213.9 416.5 219.8 425.0 225.4C433.5 231.0 441.0 237.0 447.6 243.8C454.2 250.6 460.0 258.9 464.5 266.4C469.0 273.9 471.7 281.7 474.4 289.0C477.1 296.3 479.8 306.8 480.9 310.3L480.7 313.3L472.6 312.5L463.4 314.3L458.1 316.4C458.8 316.8 461.2 318.0 462.0 319.0C462.8 320.0 463.0 321.2 462.6 322.2C462.2 323.2 461.0 324.5 459.4 324.9C457.8 325.2 454.6 324.0 452.8 324.3C451.1 324.6 450.0 325.7 448.9 326.5C447.8 327.3 446.8 328.1 446.2 329.1C445.6 330.1 445.5 331.8 445.4 332.3L460.8 364L428 389.6L449.2 407.6C448.4 409.1 447.3 412.7 444.7 416.3C442.1 419.9 438.1 424.8 433.4 429.0C428.7 433.2 422.5 438.1 416.4 441.8C410.3 445.5 403.7 448.4 396.6 451.0C389.5 453.6 381.6 455.8 374.0 457.4C366.4 459.0 357.3 459.9 351.3 460.4C345.3 460.9 342.5 460.9 338.0 460.6C333.5 460.3 331.0 460.3 324.5 458.8C318.0 457.3 307.0 454.5 299.0 451.7C291.0 448.9 283.5 446.1 276.4 441.8C269.3 437.6 262.7 432.1 256.6 426.2C250.5 420.3 244.6 413.5 239.6 406.4C234.6 399.3 230.4 390.9 226.9 383.8C223.4 376.7 220.8 370.6 218.4 364.0C216.0 357.4 214.0 349.7 212.7 344.0C211.4 338.3 211.0 334.4 210.8 330.0C210.6 325.6 210.5 324.2 211.3 317.4C212.1 310.6 213.2 298.0 215.6 289.0C218.0 280.0 221.0 271.9 225.5 263.6C230.0 255.4 235.9 246.3 242.5 239.5C249.1 232.7 256.5 227.4 265.0 222.5C273.5 217.6 284.2 212.8 293.4 209.8C302.6 206.8 311.4 205.6 320.0 204.4C328.6 203.2 340.8 202.7 345.0 202.4Z" fill="none" stroke="#acacac" stroke-width=".8" opacity=".85"/>
</svg>

<div class="a" id="vscroll"></div>
<div class="a" id="vthumb"></div>


<!-- options bar -->
<svg style="left:0;top:8px" width="600" height="20" viewBox="0 8 600 20" fill="none">
  <!-- move tool icon -->
  <g fill="#dadada" stroke="none" transform="translate(20.300 18.900) scale(.88) translate(-20.300 -18.900)">
    <path d="M20.3 13.6l2.1 2.4h-1.5v2.2h2.2v-1.5l2.4 2.2-2.4 2.2v-1.5h-2.2v2.2h1.5l-2.1 2.4-2.1-2.4h1.5v-2.2h-2.2v1.5l-2.4-2.2 2.4-2.2v1.5h2.2v-2.2h-1.5z"/>
  </g>
  <path d="M30.3 18l2.2 2.2 2.2-2.2" stroke="#cfcfcf" stroke-width="1"/>
  <rect x="40" y="11" width="1" height="15" fill="#474747"/>
  <!-- checked box -->
  <rect x="44" y="14.8" width="7.2" height="7.2" rx="1.2" fill="#e4e4e4"/>
  <path d="M45.6 18.3l1.6 1.7 2.7-3.2" stroke="#222" stroke-width="1.3"/>
  <!-- dropdown -->
  <rect x="90" y="12" width="31" height="11.5" rx="1.5" fill="#3f3f3f"/>
  <path d="M114.8 17l1.9 1.9 1.9-1.9" stroke="#cfcfcf" stroke-width="0.9"/>
  <rect x="124" y="11" width="1" height="15" fill="#474747"/>
  <!-- unchecked box -->
  <rect x="127.4" y="15.4" width="6.2" height="6.2" rx="1" fill="#505050" stroke="#8c8c8c" stroke-width="0.8"/>
  <rect x="183" y="11" width="1" height="15" fill="#474747"/>
  <!-- align icons -->
  <g fill="#a9a9a9">
    <!-- 1 top edges -->
    <rect x="190" y="14" width="8" height="1"/><rect x="191.2" y="15.6" width="2.2" height="6.2"/><rect x="194.6" y="15.6" width="2.2" height="3.6"/>
    <!-- 2 vertical centers -->
    <rect x="206.3" y="17.5" width="8" height="1"/><rect x="207.6" y="14.2" width="2.2" height="7.6"/><rect x="211" y="15.8" width="2.2" height="4.4"/>
    <!-- 3 bottom edges -->
    <rect x="222" y="21.2" width="8" height="1"/><rect x="223.2" y="14.4" width="2.2" height="6.2"/><rect x="226.6" y="17" width="2.2" height="3.6"/>
    <!-- 4 left edges -->
    <rect x="240.5" y="14" width="1" height="8.2"/><rect x="242.1" y="15.3" width="6.2" height="2.2"/><rect x="242.1" y="18.8" width="3.8" height="2.2"/>
    <!-- 5 horizontal centers -->
    <rect x="260" y="14" width="1" height="8.2"/><rect x="256.6" y="15.3" width="7.8" height="2.2"/><rect x="258.2" y="18.8" width="4.6" height="2.2"/>
    <!-- 6 right edges -->
    <rect x="279" y="14" width="1" height="8.2"/><rect x="272.2" y="15.3" width="6.2" height="2.2"/><rect x="274.6" y="18.8" width="3.8" height="2.2"/>
  </g>
  <rect x="287" y="11" width="1" height="15" fill="#474747"/>
  <g fill="#a9a9a9">
    <!-- 7 distribute top -->
    <rect x="293.6" y="14.4" width="8" height="1"/><rect x="293.6" y="18.6" width="8" height="1"/><rect x="295.4" y="15.6" width="4.4" height="1.8"/><rect x="295.4" y="19.8" width="4.4" height="1.8"/>
    <!-- 8 distribute v centers -->
    <rect x="309.5" y="15.6" width="8" height="1"/><rect x="309.5" y="19.6" width="8" height="1"/><rect x="311.3" y="14.6" width="4.4" height="3"/><rect x="311.3" y="18.6" width="4.4" height="3"/>
    <!-- 9 distribute bottom -->
    <rect x="325.7" y="17" width="8" height="1"/><rect x="325.7" y="21.2" width="8" height="1"/><rect x="327.5" y="15" width="4.4" height="1.8"/><rect x="327.5" y="19.2" width="4.4" height="1.8"/>
    <!-- 10 distribute left -->
    <rect x="344.2" y="14" width="1" height="8.2"/><rect x="348.4" y="14" width="1" height="8.2"/><rect x="345.4" y="15.8" width="1.8" height="4.6"/><rect x="349.6" y="15.8" width="1.8" height="4.6"/>
    <!-- 11 distribute h centers -->
    <rect x="362" y="14" width="1" height="8.2"/><rect x="366.2" y="14" width="1" height="8.2"/><rect x="361" y="15.8" width="3" height="4.6"/><rect x="365.2" y="15.8" width="3" height="4.6"/>
    <!-- 12 distribute right -->
    <rect x="379.6" y="14" width="1" height="8.2"/><rect x="383.8" y="14" width="1" height="8.2"/><rect x="377.6" y="15.8" width="1.8" height="4.6"/><rect x="381.8" y="15.8" width="1.8" height="4.6"/>
  </g>
  <rect x="391" y="11" width="1" height="15" fill="#474747"/>
  <g fill="#a9a9a9">
    <rect x="398" y="14" width="2.8" height="2"/><rect x="402.2" y="14" width="2.8" height="2"/>
    <rect x="398" y="17" width="2.8" height="5.4"/><rect x="402.2" y="17" width="2.8" height="5.4"/>
  </g>
  <rect x="412" y="11" width="1" height="15" fill="#474747"/>
  <!-- 3D icons (dim) -->
  <g stroke="#979797" stroke-width="1" fill="none">
    <path d="M452 19.5a2.4 2.4 0 0 1 1.2-4.2a2.8 2.8 0 0 1 5 .6a2 2 0 0 1 1 3.8h-3.4"/><path d="M455.2 17.8l-1.7 1.7 1.7 1.7"/>
    <circle cx="471.5" cy="18.2" r="3.9"/><circle cx="471.5" cy="18.2" r="1.7"/>
  </g>
  <g fill="#979797">
    <path d="M487.5 13.6l2 2.2h-4zM487.5 22.8l2-2.2h-4zM482.9 18.2l2.2-2v4zM492.1 18.2l-2.2-2v4z"/><rect x="486.5" y="17.2" width="2" height="2"/>
    <path d="M503 14l1.8 2h-3.6zM503 22.4l1.8-2h-3.6zM498.8 18.2l2-1.8v3.6zM507.200 18.2l-2-1.8v3.6z"/><rect x="502.3" y="17.5" width="1.4" height="1.4"/>
    <rect x="514.6" y="16.2" width="5.4" height="4" rx="0.6"/><path d="M520.6 18.200l3-2v4z"/>
  </g>
</svg>
<div class="t" style="left:56.5px;top:13px;font-size:7.2px;color:#dadada"><i>自</i><i>动</i><i>选</i><i>择</i>:</div>
<div class="t" style="left:93.5px;top:13px;font-size:7.2px;color:#dadada"><i>图</i><i>层</i></div>
<div class="t" style="left:139px;top:13px;font-size:7px;color:#dadada"><i>显</i><i>示</i><i>变</i><i>换</i><i>控</i><i>件</i></div>
<div class="t" style="left:415px;top:13px;font-size:7px;color:#8c8c8c">3D <i>模</i><i>式</i>:</div>
<!-- right side option icons -->
<svg style="left:800px;top:8px" width="70" height="20" viewBox="800 8 70 20" fill="none" stroke="#d4d4d4" stroke-width="1.1">
  <circle cx="815.700" cy="17" r="3.100"/><path d="M813.500 19.300l-2.700 2.900" stroke-width="1.300"/>
  <rect x="828.700" y="14.600" width="8.600" height="7.500" rx="0.800"/><rect x="828.700" y="14.400" width="8.600" height="1.700" fill="#d4d4d4" stroke="none"/><rect x="829.300" y="16" width="1.700" height="5.600" fill="#d4d4d4" stroke="none" opacity=".75"/>
  <path d="M844.300 17.700l1.900 1.900 1.900-1.900" stroke-width="1"/>
  <path d="M858 17.300h-1.900v5.200h8.500v-5.200h-1.900M860.350 19.800v-6.600M858 15.200l2.350-2.350 2.350 2.350" stroke-width="1.200"/>
</svg>

<!-- tab -->
<svg style="left:54.700px;top:34px" width="8" height="8" viewBox="0 0 8 8" fill="none" stroke="#c8c8c8" stroke-width=".95"><path d="M1.500 1.700l3.800 4M5.300 1.700l-3.800 4"/></svg>
<div class="t" style="left:65.5px;top:32.5px;font-size:7.6px;color:#f0f0f0;letter-spacing:0px;-webkit-text-stroke:.28px #f0f0f0;transform:scaleY(1.08)"><i>毕</i><i>设</i>2.psd @ 273% (<i>图</i><i>层</i><i>二</i>, RGB/8#) *</div>
<svg style="left:52px;top:46px" width="552" height="10" viewBox="52 46 552 10">
<rect x="51.3" y="46" width="552.7" height="0.8" fill="#3e3e3e"/>
<rect x="51.8" y="47" width="8" height="7.8" fill="#585858"/>
<rect x="60.3" y="46.5" width="0.8" height="9.5" fill="#3c3c3c"/>
<rect x="72.50" y="46.5" width="0.8" height="9.5" fill="#676767"/>
<rect x="114.23" y="46.5" width="0.8" height="9.5" fill="#676767"/>
<rect x="155.96" y="46.5" width="0.8" height="9.5" fill="#676767"/>
<rect x="197.69" y="46.5" width="0.8" height="9.5" fill="#676767"/>
<rect x="239.42" y="46.5" width="0.8" height="9.5" fill="#676767"/>
<rect x="281.15" y="46.5" width="0.8" height="9.5" fill="#676767"/>
<rect x="322.88" y="46.5" width="0.8" height="9.5" fill="#676767"/>
<rect x="364.61" y="46.5" width="0.8" height="9.5" fill="#676767"/>
<rect x="406.34" y="46.5" width="0.8" height="9.5" fill="#676767"/>
<rect x="448.07" y="46.5" width="0.8" height="9.5" fill="#676767"/>
<rect x="489.80" y="46.5" width="0.8" height="9.5" fill="#676767"/>
<rect x="531.53" y="46.5" width="0.8" height="9.5" fill="#676767"/>
<rect x="573.26" y="46.5" width="0.8" height="9.5" fill="#676767"/>
<rect x="64.20" y="54.1" width="0.7" height="1.9" fill="#666666"/>
<rect x="68.38" y="54.1" width="0.7" height="1.9" fill="#666666"/>
<rect x="76.72" y="54.1" width="0.7" height="1.9" fill="#666666"/>
<rect x="80.90" y="54.1" width="0.7" height="1.9" fill="#666666"/>
<rect x="85.07" y="54.1" width="0.7" height="1.9" fill="#666666"/>
<rect x="89.24" y="54.1" width="0.7" height="1.9" fill="#666666"/>
<rect x="93.42" y="53.4" width="0.7" height="2.6" fill="#666666"/>
<rect x="97.59" y="54.1" width="0.7" height="1.9" fill="#666666"/>
<rect x="101.76" y="54.1" width="0.7" height="1.9" fill="#666666"/>
<rect x="105.93" y="54.1" width="0.7" height="1.9" fill="#666666"/>
<rect x="110.11" y="54.1" width="0.7" height="1.9" fill="#666666"/>
<rect x="118.45" y="54.1" width="0.7" height="1.9" fill="#666666"/>
<rect x="122.63" y="54.1" width="0.7" height="1.9" fill="#666666"/>
<rect x="126.80" y="54.1" width="0.7" height="1.9" fill="#666666"/>
<rect x="130.97" y="54.1" width="0.7" height="1.9" fill="#666666"/>
<rect x="135.15" y="53.4" width="0.7" height="2.6" fill="#666666"/>
<rect x="139.32" y="54.1" width="0.7" height="1.9" fill="#666666"/>
<rect x="143.49" y="54.1" width="0.7" height="1.9" fill="#666666"/>
<rect x="147.66" y="54.1" width="0.7" height="1.9" fill="#666666"/>
<rect x="151.84" y="54.1" width="0.7" height="1.9" fill="#666666"/>
<rect x="160.18" y="54.1" width="0.7" height="1.9" fill="#666666"/>
<rect x="164.36" y="54.1" width="0.7" height="1.9" fill="#666666"/>
<rect x="168.53" y="54.1" width="0.7" height="1.9" fill="#666666"/>
<rect x="172.70" y="54.1" width="0.7" height="1.9" fill="#666666"/>
<rect x="176.88" y="53.4" width="0.7" height="2.6" fill="#666666"/>
<rect x="181.05" y="54.1" width="0.7" height="1.9" fill="#666666"/>
<rect x="185.22" y="54.1" width="0.7" height="1.9" fill="#666666"/>
<rect x="189.39" y="54.1" width="0.7" height="1.9" fill="#666666"/>
<rect x="193.57" y="54.1" width="0.7" height="1.9" fill="#666666"/>
<rect x="201.91" y="54.1" width="0.7" height="1.9" fill="#666666"/>
<rect x="206.09" y="54.1" width="0.7" height="1.9" fill="#666666"/>
<rect x="210.26" y="54.1" width="0.7" height="1.9" fill="#666666"/>
<rect x="214.43" y="54.1" width="0.7" height="1.9" fill="#666666"/>
<rect x="218.61" y="53.4" width="0.7" height="2.6" fill="#666666"/>
<rect x="222.78" y="54.1" width="0.7" height="1.9" fill="#666666"/>
<rect x="226.95" y="54.1" width="0.7" height="1.9" fill="#666666"/>
<rect x="231.12" y="54.1" width="0.7" height="1.9" fill="#666666"/>
<rect x="235.30" y="54.1" width="0.7" height="1.9" fill="#666666"/>
<rect x="243.64" y="54.1" width="0.7" height="1.9" fill="#666666"/>
<rect x="247.82" y="54.1" width="0.7" height="1.9" fill="#666666"/>
<rect x="251.99" y="54.1" width="0.7" height="1.9" fill="#666666"/>
<rect x="256.16" y="54.1" width="0.7" height="1.9" fill="#666666"/>
<rect x="260.33" y="53.4" width="0.7" height="2.6" fill="#666666"/>
<rect x="264.51" y="54.1" width="0.7" height="1.9" fill="#666666"/>
<rect x="268.68" y="54.1" width="0.7" height="1.9" fill="#666666"/>
<rect x="272.85" y="54.1" width="0.7" height="1.9" fill="#666666"/>
<rect x="277.03" y="54.1" width="0.7" height="1.9" fill="#666666"/>
<rect x="285.37" y="54.1" width="0.7" height="1.9" fill="#666666"/>
<rect x="289.55" y="54.1" width="0.7" height="1.9" fill="#666666"/>
<rect x="293.72" y="54.1" width="0.7" height="1.9" fill="#666666"/>
<rect x="297.89" y="54.1" width="0.7" height="1.9" fill="#666666"/>
<rect x="302.06" y="53.4" width="0.7" height="2.6" fill="#666666"/>
<rect x="306.24" y="54.1" width="0.7" height="1.9" fill="#666666"/>
<rect x="310.41" y="54.1" width="0.7" height="1.9" fill="#666666"/>
<rect x="314.58" y="54.1" width="0.7" height="1.9" fill="#666666"/>
<rect x="318.76" y="54.1" width="0.7" height="1.9" fill="#666666"/>
<rect x="327.10" y="54.1" width="0.7" height="1.9" fill="#666666"/>
<rect x="331.28" y="54.1" width="0.7" height="1.9" fill="#666666"/>
<rect x="335.45" y="54.1" width="0.7" height="1.9" fill="#666666"/>
<rect x="339.62" y="54.1" width="0.7" height="1.9" fill="#666666"/>
<rect x="343.79" y="53.4" width="0.7" height="2.6" fill="#666666"/>
<rect x="347.97" y="54.1" width="0.7" height="1.9" fill="#666666"/>
<rect x="352.14" y="54.1" width="0.7" height="1.9" fill="#666666"/>
<rect x="356.31" y="54.1" width="0.7" height="1.9" fill="#666666"/>
<rect x="360.49" y="54.1" width="0.7" height="1.9" fill="#666666"/>
<rect x="368.83" y="54.1" width="0.7" height="1.9" fill="#666666"/>
<rect x="373.01" y="54.1" width="0.7" height="1.9" fill="#666666"/>
<rect x="377.18" y="54.1" width="0.7" height="1.9" fill="#666666"/>
<rect x="381.35" y="54.1" width="0.7" height="1.9" fill="#666666"/>
<rect x="385.52" y="53.4" width="0.7" height="2.6" fill="#666666"/>
<rect x="389.70" y="54.1" width="0.7" height="1.9" fill="#666666"/>
<rect x="393.87" y="54.1" width="0.7" height="1.9" fill="#666666"/>
<rect x="398.04" y="54.1" width="0.7" height="1.9" fill="#666666"/>
<rect x="402.22" y="54.1" width="0.7" height="1.9" fill="#666666"/>
<rect x="410.56" y="54.1" width="0.7" height="1.9" fill="#666666"/>
<rect x="414.74" y="54.1" width="0.7" height="1.9" fill="#666666"/>
<rect x="418.91" y="54.1" width="0.7" height="1.9" fill="#666666"/>
<rect x="423.08" y="54.1" width="0.7" height="1.9" fill="#666666"/>
<rect x="427.25" y="53.4" width="0.7" height="2.6" fill="#666666"/>
<rect x="431.43" y="54.1" width="0.7" height="1.9" fill="#666666"/>
<rect x="435.60" y="54.1" width="0.7" height="1.9" fill="#666666"/>
<rect x="439.77" y="54.1" width="0.7" height="1.9" fill="#666666"/>
<rect x="443.95" y="54.1" width="0.7" height="1.9" fill="#666666"/>
<rect x="452.29" y="54.1" width="0.7" height="1.9" fill="#666666"/>
<rect x="456.47" y="54.1" width="0.7" height="1.9" fill="#666666"/>
<rect x="460.64" y="54.1" width="0.7" height="1.9" fill="#666666"/>
<rect x="464.81" y="54.1" width="0.7" height="1.9" fill="#666666"/>
<rect x="468.99" y="53.4" width="0.7" height="2.6" fill="#666666"/>
<rect x="473.16" y="54.1" width="0.7" height="1.9" fill="#666666"/>
<rect x="477.33" y="54.1" width="0.7" height="1.9" fill="#666666"/>
<rect x="481.50" y="54.1" width="0.7" height="1.9" fill="#666666"/>
<rect x="485.68" y="54.1" width="0.7" height="1.9" fill="#666666"/>
<rect x="494.02" y="54.1" width="0.7" height="1.9" fill="#666666"/>
<rect x="498.20" y="54.1" width="0.7" height="1.9" fill="#666666"/>
<rect x="502.37" y="54.1" width="0.7" height="1.9" fill="#666666"/>
<rect x="506.54" y="54.1" width="0.7" height="1.9" fill="#666666"/>
<rect x="510.72" y="53.4" width="0.7" height="2.6" fill="#666666"/>
<rect x="514.89" y="54.1" width="0.7" height="1.9" fill="#666666"/>
<rect x="519.06" y="54.1" width="0.7" height="1.9" fill="#666666"/>
<rect x="523.23" y="54.1" width="0.7" height="1.9" fill="#666666"/>
<rect x="527.41" y="54.1" width="0.7" height="1.9" fill="#666666"/>
<rect x="535.75" y="54.1" width="0.7" height="1.9" fill="#666666"/>
<rect x="539.93" y="54.1" width="0.7" height="1.9" fill="#666666"/>
<rect x="544.10" y="54.1" width="0.7" height="1.9" fill="#666666"/>
<rect x="548.27" y="54.1" width="0.7" height="1.9" fill="#666666"/>
<rect x="552.44" y="53.4" width="0.7" height="2.6" fill="#666666"/>
<rect x="556.62" y="54.1" width="0.7" height="1.9" fill="#666666"/>
<rect x="560.79" y="54.1" width="0.7" height="1.9" fill="#666666"/>
<rect x="564.96" y="54.1" width="0.7" height="1.9" fill="#666666"/>
<rect x="569.14" y="54.1" width="0.7" height="1.9" fill="#666666"/>
<rect x="577.48" y="54.1" width="0.7" height="1.9" fill="#666666"/>
<rect x="581.66" y="54.1" width="0.7" height="1.9" fill="#666666"/>
<rect x="585.83" y="54.1" width="0.7" height="1.9" fill="#666666"/>
<rect x="590.00" y="54.1" width="0.7" height="1.9" fill="#666666"/>
<rect x="393.700" y="47.200" width="1.400" height="4.600" fill="#d8d8d8"/>
</svg>
<div class="t rl" style="left:74.4px;top:48.800px">550</div>
<div class="t rl" style="left:116.1px;top:48.800px">600</div>
<div class="t rl" style="left:157.9px;top:48.800px">650</div>
<div class="t rl" style="left:199.6px;top:48.800px">700</div>
<div class="t rl" style="left:241.3px;top:48.800px">750</div>
<div class="t rl" style="left:283.0px;top:48.800px">800</div>
<div class="t rl" style="left:324.8px;top:48.800px">850</div>
<div class="t rl" style="left:366.5px;top:48.800px">900</div>
<div class="t rl" style="left:408.2px;top:48.800px">950</div>
<div class="t rl" style="left:450.0px;top:48.800px">1000</div>
<div class="t rl" style="left:491.7px;top:48.800px">1050</div>
<div class="t rl" style="left:533.4px;top:48.800px">1100</div>
<div class="t rl" style="left:575.2px;top:48.800px">1150</div>
<svg style="left:52px;top:56px" width="9" height="474" viewBox="52 56 9 474">
<rect x="52" y="63.10" width="8.5" height="0.8" fill="#676767"/>
<rect x="52" y="104.87" width="8.5" height="0.8" fill="#676767"/>
<rect x="52" y="146.64" width="8.5" height="0.8" fill="#676767"/>
<rect x="52" y="188.41" width="8.5" height="0.8" fill="#676767"/>
<rect x="52" y="230.18" width="8.5" height="0.8" fill="#676767"/>
<rect x="52" y="271.95" width="8.5" height="0.8" fill="#676767"/>
<rect x="52" y="313.72" width="8.5" height="0.8" fill="#676767"/>
<rect x="52" y="355.49" width="8.5" height="0.8" fill="#676767"/>
<rect x="52" y="397.26" width="8.5" height="0.8" fill="#676767"/>
<rect x="52" y="439.03" width="8.5" height="0.8" fill="#676767"/>
<rect x="52" y="480.80" width="8.5" height="0.8" fill="#676767"/>
<rect x="52" y="522.57" width="8.5" height="0.8" fill="#676767"/>
<rect x="58.5" y="58.97" width="1.9" height="0.7" fill="#666666"/>
<rect x="58.5" y="67.33" width="1.9" height="0.7" fill="#666666"/>
<rect x="58.5" y="71.50" width="1.9" height="0.7" fill="#666666"/>
<rect x="58.5" y="75.68" width="1.9" height="0.7" fill="#666666"/>
<rect x="58.5" y="79.86" width="1.9" height="0.7" fill="#666666"/>
<rect x="57.8" y="84.04" width="2.6" height="0.7" fill="#666666"/>
<rect x="58.5" y="88.21" width="1.9" height="0.7" fill="#666666"/>
<rect x="58.5" y="92.39" width="1.9" height="0.7" fill="#666666"/>
<rect x="58.5" y="96.57" width="1.9" height="0.7" fill="#666666"/>
<rect x="58.5" y="100.74" width="1.9" height="0.7" fill="#666666"/>
<rect x="58.5" y="109.10" width="1.9" height="0.7" fill="#666666"/>
<rect x="58.5" y="113.27" width="1.9" height="0.7" fill="#666666"/>
<rect x="58.5" y="117.45" width="1.9" height="0.7" fill="#666666"/>
<rect x="58.5" y="121.63" width="1.9" height="0.7" fill="#666666"/>
<rect x="57.8" y="125.81" width="2.6" height="0.7" fill="#666666"/>
<rect x="58.5" y="129.98" width="1.9" height="0.7" fill="#666666"/>
<rect x="58.5" y="134.16" width="1.9" height="0.7" fill="#666666"/>
<rect x="58.5" y="138.34" width="1.9" height="0.7" fill="#666666"/>
<rect x="58.5" y="142.51" width="1.9" height="0.7" fill="#666666"/>
<rect x="58.5" y="150.87" width="1.9" height="0.7" fill="#666666"/>
<rect x="58.5" y="155.04" width="1.9" height="0.7" fill="#666666"/>
<rect x="58.5" y="159.22" width="1.9" height="0.7" fill="#666666"/>
<rect x="58.5" y="163.40" width="1.9" height="0.7" fill="#666666"/>
<rect x="57.8" y="167.58" width="2.6" height="0.7" fill="#666666"/>
<rect x="58.5" y="171.75" width="1.9" height="0.7" fill="#666666"/>
<rect x="58.5" y="175.93" width="1.9" height="0.7" fill="#666666"/>
<rect x="58.5" y="180.11" width="1.9" height="0.7" fill="#666666"/>
<rect x="58.5" y="184.28" width="1.9" height="0.7" fill="#666666"/>
<rect x="58.5" y="192.64" width="1.9" height="0.7" fill="#666666"/>
<rect x="58.5" y="196.81" width="1.9" height="0.7" fill="#666666"/>
<rect x="58.5" y="200.99" width="1.9" height="0.7" fill="#666666"/>
<rect x="58.5" y="205.17" width="1.9" height="0.7" fill="#666666"/>
<rect x="57.8" y="209.35" width="2.6" height="0.7" fill="#666666"/>
<rect x="58.5" y="213.52" width="1.9" height="0.7" fill="#666666"/>
<rect x="58.5" y="217.70" width="1.9" height="0.7" fill="#666666"/>
<rect x="58.5" y="221.88" width="1.9" height="0.7" fill="#666666"/>
<rect x="58.5" y="226.05" width="1.9" height="0.7" fill="#666666"/>
<rect x="58.5" y="234.41" width="1.9" height="0.7" fill="#666666"/>
<rect x="58.5" y="238.58" width="1.9" height="0.7" fill="#666666"/>
<rect x="58.5" y="242.76" width="1.9" height="0.7" fill="#666666"/>
<rect x="58.5" y="246.94" width="1.9" height="0.7" fill="#666666"/>
<rect x="57.8" y="251.12" width="2.6" height="0.7" fill="#666666"/>
<rect x="58.5" y="255.29" width="1.9" height="0.7" fill="#666666"/>
<rect x="58.5" y="259.47" width="1.9" height="0.7" fill="#666666"/>
<rect x="58.5" y="263.65" width="1.9" height="0.7" fill="#666666"/>
<rect x="58.5" y="267.82" width="1.9" height="0.7" fill="#666666"/>
<rect x="58.5" y="276.18" width="1.9" height="0.7" fill="#666666"/>
<rect x="58.5" y="280.35" width="1.9" height="0.7" fill="#666666"/>
<rect x="58.5" y="284.53" width="1.9" height="0.7" fill="#666666"/>
<rect x="58.5" y="288.71" width="1.9" height="0.7" fill="#666666"/>
<rect x="57.8" y="292.88" width="2.6" height="0.7" fill="#666666"/>
<rect x="58.5" y="297.06" width="1.9" height="0.7" fill="#666666"/>
<rect x="58.5" y="301.24" width="1.9" height="0.7" fill="#666666"/>
<rect x="58.5" y="305.42" width="1.9" height="0.7" fill="#666666"/>
<rect x="58.5" y="309.59" width="1.9" height="0.7" fill="#666666"/>
<rect x="58.5" y="317.95" width="1.9" height="0.7" fill="#666666"/>
<rect x="58.5" y="322.12" width="1.9" height="0.7" fill="#666666"/>
<rect x="58.5" y="326.30" width="1.9" height="0.7" fill="#666666"/>
<rect x="58.5" y="330.48" width="1.9" height="0.7" fill="#666666"/>
<rect x="57.8" y="334.66" width="2.6" height="0.7" fill="#666666"/>
<rect x="58.5" y="338.83" width="1.9" height="0.7" fill="#666666"/>
<rect x="58.5" y="343.01" width="1.9" height="0.7" fill="#666666"/>
<rect x="58.5" y="347.19" width="1.9" height="0.7" fill="#666666"/>
<rect x="58.5" y="351.36" width="1.9" height="0.7" fill="#666666"/>
<rect x="58.5" y="359.72" width="1.9" height="0.7" fill="#666666"/>
<rect x="58.5" y="363.89" width="1.9" height="0.7" fill="#666666"/>
<rect x="58.5" y="368.07" width="1.9" height="0.7" fill="#666666"/>
<rect x="58.5" y="372.25" width="1.9" height="0.7" fill="#666666"/>
<rect x="57.8" y="376.43" width="2.6" height="0.7" fill="#666666"/>
<rect x="58.5" y="380.60" width="1.9" height="0.7" fill="#666666"/>
<rect x="58.5" y="384.78" width="1.9" height="0.7" fill="#666666"/>
<rect x="58.5" y="388.96" width="1.9" height="0.7" fill="#666666"/>
<rect x="58.5" y="393.13" width="1.9" height="0.7" fill="#666666"/>
<rect x="58.5" y="401.49" width="1.9" height="0.7" fill="#666666"/>
<rect x="58.5" y="405.66" width="1.9" height="0.7" fill="#666666"/>
<rect x="58.5" y="409.84" width="1.9" height="0.7" fill="#666666"/>
<rect x="58.5" y="414.02" width="1.9" height="0.7" fill="#666666"/>
<rect x="57.8" y="418.19" width="2.6" height="0.7" fill="#666666"/>
<rect x="58.5" y="422.37" width="1.9" height="0.7" fill="#666666"/>
<rect x="58.5" y="426.55" width="1.9" height="0.7" fill="#666666"/>
<rect x="58.5" y="430.73" width="1.9" height="0.7" fill="#666666"/>
<rect x="58.5" y="434.90" width="1.9" height="0.7" fill="#666666"/>
<rect x="58.5" y="443.26" width="1.9" height="0.7" fill="#666666"/>
<rect x="58.5" y="447.43" width="1.9" height="0.7" fill="#666666"/>
<rect x="58.5" y="451.61" width="1.9" height="0.7" fill="#666666"/>
<rect x="58.5" y="455.79" width="1.9" height="0.7" fill="#666666"/>
<rect x="57.8" y="459.97" width="2.6" height="0.7" fill="#666666"/>
<rect x="58.5" y="464.14" width="1.9" height="0.7" fill="#666666"/>
<rect x="58.5" y="468.32" width="1.9" height="0.7" fill="#666666"/>
<rect x="58.5" y="472.50" width="1.9" height="0.7" fill="#666666"/>
<rect x="58.5" y="476.67" width="1.9" height="0.7" fill="#666666"/>
<rect x="58.5" y="485.03" width="1.9" height="0.7" fill="#666666"/>
<rect x="58.5" y="489.20" width="1.9" height="0.7" fill="#666666"/>
<rect x="58.5" y="493.38" width="1.9" height="0.7" fill="#666666"/>
<rect x="58.5" y="497.56" width="1.9" height="0.7" fill="#666666"/>
<rect x="57.8" y="501.74" width="2.6" height="0.7" fill="#666666"/>
<rect x="58.5" y="505.91" width="1.9" height="0.7" fill="#666666"/>
<rect x="58.5" y="510.09" width="1.9" height="0.7" fill="#666666"/>
<rect x="58.5" y="514.27" width="1.9" height="0.7" fill="#666666"/>
<rect x="58.5" y="518.44" width="1.9" height="0.7" fill="#666666"/>
<rect x="58.5" y="526.80" width="1.9" height="0.7" fill="#666666"/>
<rect x="52.200" y="211.400" width="4.800" height="1.200" fill="#d8d8d8"/>
</svg>
<div class="t rv" style="left:52px;top:64.6px">1</div>
<div class="t rv" style="left:52px;top:70.3px">0</div>
<div class="t rv" style="left:52px;top:76.1px">0</div>
<div class="t rv" style="left:52px;top:106.4px">1</div>
<div class="t rv" style="left:52px;top:112.1px">5</div>
<div class="t rv" style="left:52px;top:117.9px">0</div>
<div class="t rv" style="left:52px;top:148.1px">2</div>
<div class="t rv" style="left:52px;top:153.9px">0</div>
<div class="t rv" style="left:52px;top:159.6px">0</div>
<div class="t rv" style="left:52px;top:189.9px">2</div>
<div class="t rv" style="left:52px;top:195.7px">5</div>
<div class="t rv" style="left:52px;top:201.4px">0</div>
<div class="t rv" style="left:52px;top:231.7px">3</div>
<div class="t rv" style="left:52px;top:237.4px">0</div>
<div class="t rv" style="left:52px;top:243.2px">0</div>
<div class="t rv" style="left:52px;top:273.5px">3</div>
<div class="t rv" style="left:52px;top:279.2px">5</div>
<div class="t rv" style="left:52px;top:285.0px">0</div>
<div class="t rv" style="left:52px;top:315.2px">4</div>
<div class="t rv" style="left:52px;top:321.0px">0</div>
<div class="t rv" style="left:52px;top:326.7px">0</div>
<div class="t rv" style="left:52px;top:357.0px">4</div>
<div class="t rv" style="left:52px;top:362.7px">5</div>
<div class="t rv" style="left:52px;top:368.5px">0</div>
<div class="t rv" style="left:52px;top:398.8px">5</div>
<div class="t rv" style="left:52px;top:404.5px">0</div>
<div class="t rv" style="left:52px;top:410.3px">0</div>
<div class="t rv" style="left:52px;top:440.5px">5</div>
<div class="t rv" style="left:52px;top:446.3px">5</div>
<div class="t rv" style="left:52px;top:452.0px">0</div>
<div class="t rv" style="left:52px;top:482.3px">6</div>
<div class="t rv" style="left:52px;top:488.1px">0</div>
<div class="t rv" style="left:52px;top:493.8px">0</div>
<div class="t rv" style="left:52px;top:524.1px">6</div>
<div class="t rv" style="left:52px;top:529.8px">5</div>
<div class="t rv" style="left:52px;top:535.6px">0</div>
<!-- right icon column -->
<div class="a" id="ich"></div><div class="a" id="ic"></div>
<div class="a icsep" style="top:76.800px"></div>
<div class="a icsep" style="top:102.700px"></div>
<div class="a icsep" style="top:127.100px"></div>
<div class="a icsep" style="top:151.800px"></div>

<!-- layers panel -->
<div class="a" id="lph"></div>
<div class="a" id="lptabs"></div>
<div class="a" id="lptab"></div>
<div class="a" id="lp"></div>
<div class="a" style="left:654px;top:36px;width:50px;height:17px;background:#454545"></div>
<div class="a" style="left:679px;top:36px;width:1px;height:17px;background:#3f3f3f"></div>
<div class="a" style="left:704px;top:36px;width:1px;height:17px;background:#3f3f3f"></div>


<!-- right icon column icons -->
<svg style="left:605px;top:28px" width="265" height="130" viewBox="605 28 265 130" fill="none" stroke="#dcdcdc" stroke-width="1" stroke-linecap="round" stroke-linejoin="round">
  <path d="M622.600 30.300l-1.700 1.600 1.700 1.600M625 30.300l-1.700 1.600 1.700 1.600" stroke="#b4b4b4" stroke-width=".8"/>
  <path d="M863.200 30.500l1.700 1.600-1.700 1.600M865.600 30.500l1.700 1.600-1.700 1.600" stroke="#b4b4b4" stroke-width=".8"/>
  <g stroke="#474747" stroke-width="1" stroke-linecap="butt"><path d="M611 39.500h12M611 81.800h12M611 107.600h12M611 132.400h12" stroke-dasharray="1 1"/></g>
  <!-- history -->
  <rect x="612.600" y="45" width="3" height="3" stroke-width=".8"/><rect x="612.600" y="49" width="3" height="3" stroke-width=".8"/><rect x="612.400" y="53" width="3.400" height="3.400" fill="#e6e6e6" stroke="none"/>
  <path d="M618.400 46.400c3-.3 4.300 2 3.800 4.300-.4 1.900-1.700 3.200-3.400 3.600" stroke-width="1.300"/><path d="M619.800 44.400l-2 2.100 2.400 1.500" stroke-width="1"/>
  <!-- play -->
  <path d="M612.800 63.400l8.600 4.800-8.600 4.800z" fill="#e2e2e2" stroke="none"/>
  <!-- info -->
  <circle cx="617.100" cy="92.700" r="5.200" stroke-width="1.100"/><path d="M617.100 92v3.600" stroke-width="1.300"/><circle cx="617.100" cy="89.900" r=".8" fill="#dcdcdc" stroke="none"/>
  <!-- A glyph -->
  <!-- bowtie -->
  <path d="M612.400 138.400l4.400 3.200 4.400-3.200v9.400l-4.400-3.200-4.400 3.200z" stroke-width="1.100" stroke-dasharray="1.600 .7"/>
  <!-- panel menu -->
  <g stroke="#a0a0a0" stroke-width=".8" stroke-linecap="butt"><path d="M861.600 43h5.600M861.600 44.300h5.600M861.600 45.600h5.600M861.600 46.900h5.600"/></g>
</svg>
<div class="t" style="left:612.600px;top:110.300px;font-family:'Liberation Serif',serif;font-style:italic;font-weight:bold;font-size:13.500px;line-height:16px;height:16px;color:#dcdcdc">A</div>

<!-- layers panel content -->
<div class="t" style="left:635.200px;top:39.500px;font-size:6.800px;color:#f0f0f0;font-weight:bold"><i>图</i><i>层</i></div>
<div class="t" style="left:660px;top:39.500px;font-size:6.800px;color:#cacaca"><i>通</i><i>道</i></div>
<div class="t" style="left:684.800px;top:39.500px;font-size:6.800px;color:#cacaca"><i>路</i><i>径</i></div>

<div class="a dd" style="left:633px;top:59px;width:45px;height:11px"></div>
<div class="a hl" style="top:72.400px"></div>
<div class="a dd" style="left:633px;top:76.500px;width:67.500px;height:10.500px"></div>
<div class="a dd" style="left:735.200px;top:76.500px;width:23.800px;height:10.500px"></div>
<div class="a dd" style="left:761px;top:76.500px;width:7.800px;height:10.500px"></div>
<div class="a hl" style="top:89.200px"></div>
<div class="a dd" style="left:735.200px;top:93.500px;width:23.800px;height:10.500px"></div>
<div class="a dd" style="left:761px;top:93.500px;width:7.800px;height:10.500px"></div>
<div class="t" style="left:645px;top:59.600px;font-size:6.800px;color:#e6e6e6"><i>类</i><i>型</i></div>
<div class="t" style="left:636.500px;top:77px;font-size:7px;color:#e6e6e6"><i>正</i><i>常</i></div>
<div class="t" style="left:703px;top:77px;font-size:7px;color:#dcdcdc"><i>不</i><i>透</i><i>明</i><i>度</i>:</div>
<div class="t" style="left:737.500px;top:77px;font-size:7.400px;color:#ececec">100%</div>
<div class="t" style="left:633px;top:94px;font-size:7px;color:#dcdcdc"><i>锁</i><i>定</i>:</div>
<div class="t" style="left:718px;top:94px;font-size:7px;color:#dcdcdc"><i>填</i><i>充</i>:</div>
<div class="t" style="left:737.500px;top:94px;font-size:7.400px;color:#ececec">100%</div>

<svg style="left:630px;top:53px" width="240" height="55" viewBox="630 53 240 55" fill="none" stroke="#dcdcdc" stroke-width="1" stroke-linecap="round" stroke-linejoin="round">
  <!-- search glyph -->
  <circle cx="640.900" cy="63.200" r="2" stroke-width="1"/><path d="M639.500 64.800l-1.900 2.100" stroke-width="1.200"/>
  <path d="M671.400 63.600l1.700 1.700 1.700-1.700" stroke-width=".8"/>
  <!-- filter icons -->
  <rect x="687.400" y="61" width="7.200" height="6" rx=".6" stroke-width=".9"/><path d="M688.600 65.600l1.800-2 1.400 1.400 1-.8 1 1.400" stroke-width=".7"/>
  <circle cx="706" cy="64" r="3.300" stroke-width=".9"/><path d="M706 60.700a3.300 3.300 0 0 1 0 6.600z" fill="#dcdcdc" stroke="none"/>
  <path d="M717.800 62.200v-1.400h5.800v1.400M720.700 60.900v6.300M719.500 67.300h2.400" stroke-width="1" stroke-linecap="butt"/>
  <rect x="732.600" y="61.200" width="5.600" height="5.600" stroke-width=".8"/><g fill="#dcdcdc" stroke="none"><rect x="731.600" y="60.200" width="2" height="2"/><rect x="737.200" y="60.200" width="2" height="2"/><rect x="731.600" y="65.800" width="2" height="2"/><rect x="737.200" y="65.800" width="2" height="2"/></g>
  <path d="M747.600 60.600h3.600l2 2v4.800h-5.600z" stroke-width=".9"/><rect x="750" y="64" width="3.400" height="3.400" fill="#dcdcdc" stroke="none"/>
  <rect x="764" y="59.200" width="4.800" height="10.600" rx="2.400" fill="#3c3c3c" stroke="#3c3c3c" stroke-width=".5"/><circle cx="766.400" cy="61.600" r="2.300" fill="#e8e8e8" stroke="none"/>
  <!-- chevrons -->
  <path d="M695.100 81.200l1.800 1.800 1.800-1.800M763.100 81.200l1.800 1.800 1.800-1.800M763.100 98.200l1.800 1.800 1.800-1.800" stroke-width=".95"/>
  <!-- lock icons -->
  <rect x="652.800" y="95.200" width="6.600" height="6.600" stroke-width=".8"/><g fill="#dcdcdc" stroke="none"><rect x="653.200" y="95.600" width="1.900" height="1.900"/><rect x="657" y="95.600" width="1.900" height="1.900"/><rect x="655.100" y="97.500" width="1.900" height="1.900"/><rect x="653.200" y="99.400" width="1.900" height="1.900"/><rect x="657" y="99.400" width="1.900" height="1.900"/></g>
  <path d="M673 94.600l-3.400 4" stroke-width="1.400"/><path d="M669.300 98.800c-.8.200-1.300.7-1.500 1.600-.1.600-.5.900-1 1 1.200.6 2.600.2 3.200-.9.300-.7.100-1.300-.7-1.700z" fill="#dcdcdc" stroke="none"/>
  <path fill="#dcdcdc" stroke="none" d="M682.700 94.200l1.600 1.800h-1.100v1.700h1.700v-1.100l1.800 1.600-1.800 1.600v-1.100h-1.700v1.700h1.100l-1.600 1.800-1.600-1.800h1.100v-1.700h-1.700v1.100l-1.800-1.600 1.800-1.600v1.100h1.700v-1.700h-1.100z"/>
  <path d="M694.600 94.400v6.400h6.400M692.600 96.400h6.400v6" stroke-width=".9" stroke-linecap="butt"/><path d="M696 96.400l3.400 3.600" stroke-width=".6" stroke-dasharray=".8 .6"/>
  <rect x="706.600" y="97.600" width="5.800" height="4.400" rx=".6" fill="#e6e6e6" stroke="none"/><path d="M707.900 97.600v-1.300a1.600 1.600 0 0 1 3.200 0v1.300" stroke-width=".9"/>
</svg>

<!-- layer list -->
<div class="a" style="left:630px;top:274.500px;width:232px;height:255.500px;background:#4e4e4e"></div>
<div class="a rowline" style="top:106.500px;background:#444"></div>
<div class="a" id="sel"></div>
<div class="a rowline" style="top:123.100px"></div>
<div class="a rowline" style="top:148.5px"></div>
<div class="a rowline" style="top:173.5px"></div>
<div class="a rowline" style="top:198.5px"></div>
<div class="a rowline" style="top:223.5px"></div>
<div class="a rowline" style="top:248.5px"></div>
<div class="a rowline" style="top:273.7px;background:#444"></div>
<div class="a" id="eyecol"></div>
<div class="a" id="lscroll"></div>
<div class="a" style="left:861.500px;top:107px;width:.8px;height:168px;background:#484848"></div>

<svg style="left:630px;top:107px" width="240" height="168" viewBox="630 107 240 168" fill="none" stroke="#e4e4e4" stroke-width="1" stroke-linecap="round" stroke-linejoin="round">
  <defs>
    <g id="eye"><path d="M-4.200 0c1.200-1.700 2.600-2.600 4.200-2.600s3 .9 4.200 2.600c-1.200 1.700-2.600 2.600-4.200 2.600s-3-.9-4.200-2.600z" fill="#ececec" stroke="none"/><circle r="1.500" fill="#4e4e4e" stroke="none"/></g>
  </defs>
  <use href="#eye" x="639" y="116.600"/>
  <use href="#eye" x="639" y="136.600"/>
  <use href="#eye" x="639" y="161.600"/>
  <use href="#eye" x="639" y="262"/>
  <g stroke="#5e5e5e" stroke-width=".8"><rect x="635.600" y="183.200" width="6.600" height="6.600"/><rect x="635.600" y="208.200" width="6.600" height="6.600"/><rect x="635.600" y="233.200" width="6.600" height="6.600"/></g>
  <!-- group chevron + folder -->
  <path d="M650.600 115.400l1.800 1.800 1.800-1.800" stroke-width=".8" stroke="#cfcfcf"/>
  <path d="M658.200 112.400h2.800l.9 1.100h4.400v5.400h-8.100z" stroke-width=".95"/><path d="M658.200 114.800h8.100" stroke-width=".9"/>
  <!-- lock on bg -->
  <rect x="845.400" y="261.400" width="5.600" height="4.400" rx=".7" stroke-width=".9" stroke="#d0d0d0"/><path d="M846.700 261.400v-1.400a1.500 1.500 0 0 1 3 0v1.400" stroke-width=".9" stroke="#d0d0d0"/><path d="M848.200 263v1.200" stroke-width=".7" stroke="#d0d0d0"/>
</svg>

<!-- thumbnails -->
<div class="thumb" style="left:660.800px;top:130.800px;width:18.500px;height:11.200px"></div>
<svg style="left:661px;top:130.500px" width="19" height="12" viewBox="0 0 19 12"><circle cx="6" cy="6.500" r="1.300" fill="#dedede"/></svg>

<div class="a" style="left:660.800px;top:155.800px;width:18.700px;height:11.300px;background:#000"></div>
<svg style="left:658px;top:153px" width="25" height="18" viewBox="658 153 25 18" fill="none" stroke="#f2f2f2" stroke-width="1">
  <path d="M659.300 158.200v-3.900h4.400M677 154.300h4.200v3.900M681.200 165v3.900h-4.200M663.700 168.900h-4.400v-3.900"/>
  <circle cx="666.300" cy="162.600" r="1.700" fill="#f4f4f4" stroke="none"/><circle cx="666.800" cy="162.200" r=".5" fill="#777" stroke="none"/>
</svg>

<div class="thumb" style="left:660.800px;top:176.800px;width:18.400px;height:19.500px;background:#fbfbfb"></div>
<svg style="left:660.800px;top:176.800px" width="18.400" height="19.500" viewBox="0 0 18.400 19.500">
  <defs><radialGradient id="apl" cx=".5" cy=".32" r=".75"><stop offset="0" stop-color="#e0714b"/><stop offset=".45" stop-color="#cb4e2c"/><stop offset=".8" stop-color="#8e4520"/><stop offset="1" stop-color="#5c4a1c"/></radialGradient></defs>
  <path d="M9.200 .5c5 0 8.900 3.700 8.900 8.400l-1.500.7 1.200 1.300-1.800.9.900 1.500-1.700.6.300 1.500c-1.700 2.500-4.100 3.800-7 3.800-4.800 0-8.300-4-8.300-9.200s3.900-9.500 9-9.500z" fill="url(#apl)"/>
  <path d="M.7 11.500c.6 4.200 3.400 7.400 7.600 7.700 2.400.1 4.600-.9 6.200-2.800-3 1-6 .8-8.600-.6s-4.300-3-5.200-4.300z" fill="#4f4318" opacity=".75"/>
  <ellipse cx="5.600" cy="14" rx="1.800" ry="1.300" fill="#2e260e" opacity=".9"/>
</svg>
<svg style="left:660.800px;top:205.200px" width="18.800" height="13.200" viewBox="0 0 19 12.600" preserveAspectRatio="none">
  <defs><filter id="pba" x="-5%" y="-5%" width="110%" height="110%"><feGaussianBlur stdDeviation=".55"/></filter><clipPath id="pbac"><rect width="19" height="12.600"/></clipPath></defs>
  <g clip-path="url(#pbac)"><g filter="url(#pba)">
  <rect x="-1" y="-1" width="21" height="14.600" fill="#3b3e22"/>
  <path d="M-1 -1h7l1.500 3-2.500 1.500 1.500 2.500-2.500 2 .5 2.500-2 2.100h-4.500z" fill="#d6d5c2"/>
  <path d="M2 3l2.500 1-.5 2.500-2 .5z" fill="#a4a78a"/><path d="M1 8.500l2.500-.5 1 2-1.500 1.500z" fill="#b4b79f"/><path d="M5.500 1l2.500-.5 1 2.500-2.500 1z" fill="#8d9070"/>
  <path d="M9 0h4l1.500 2-2.500 2.500-3-1.500z" fill="#6c6e44"/><path d="M14 0h5v4l-3 1.500z" fill="#2a2d16"/>
  <path d="M8 6l3-1.500 3 2-1.500 3-3.500.5z" fill="#26290f"/><path d="M13.500 6.500l3-1.500 2.500 2v3l-4 .5z" fill="#595b36"/>
  <path d="M6 10l3-.5 2.500 3.100h-5.500z" fill="#75774e"/><path d="M12 10.500l3-.5 1 2.600h-4z" fill="#2f3218"/>
  <circle cx="10.500" cy="4.200" r=".9" fill="#8c6a3c"/><circle cx="13" cy="9" r=".8" fill="#7d6a3c"/><circle cx="7.300" cy="7.500" r=".9" fill="#bdbb9c"/><circle cx="15" cy="3" r=".8" fill="#8f9162"/>
  </g></g>
  <circle cx="16.700" cy="10.500" r="1.600" fill="#f0f0f0" stroke="#2a2a2a" stroke-width=".5"/><circle cx="16.700" cy="10.500" r=".55" fill="#2a2a2a"/>
</svg>
<svg style="left:660.800px;top:230.100px" width="18.800" height="13.200" viewBox="0 0 19 12.600" preserveAspectRatio="none">
  <defs><filter id="pbb" x="-5%" y="-5%" width="110%" height="110%"><feGaussianBlur stdDeviation=".55"/></filter><clipPath id="pbbc"><rect width="19" height="12.600"/></clipPath></defs>
  <g clip-path="url(#pbbc)"><g filter="url(#pbb)">
  <rect x="-1" y="-1" width="21" height="14.600" fill="#3b3e22"/>
  <path d="M-1 -1h7l1.500 3-2.500 1.500 1.500 2.500-2.500 2 .5 2.500-2 2.100h-4.500z" fill="#d6d5c2"/>
  <path d="M2 3l2.500 1-.5 2.500-2 .5z" fill="#a4a78a"/><path d="M1 8.500l2.500-.5 1 2-1.500 1.500z" fill="#b4b79f"/><path d="M5.500 1l2.500-.5 1 2.500-2.500 1z" fill="#8d9070"/>
  <path d="M9 0h4l1.500 2-2.500 2.500-3-1.500z" fill="#6c6e44"/><path d="M14 0h5v4l-3 1.500z" fill="#2a2d16"/>
  <path d="M8 6l3-1.500 3 2-1.500 3-3.500.5z" fill="#26290f"/><path d="M13.500 6.500l3-1.500 2.500 2v3l-4 .5z" fill="#595b36"/>
  <path d="M6 10l3-.5 2.500 3.100h-5.500z" fill="#75774e"/><path d="M12 10.500l3-.5 1 2.600h-4z" fill="#2f3218"/>
  <circle cx="10.500" cy="4.200" r=".9" fill="#8c6a3c"/><circle cx="11.500" cy="8" r="1.100" fill="#b8683a"/><circle cx="7.300" cy="7.500" r=".9" fill="#bdbb9c"/><circle cx="15" cy="3" r=".8" fill="#8f9162"/>
  </g></g>
  <circle cx="16.700" cy="10.500" r="1.600" fill="#f0f0f0" stroke="#2a2a2a" stroke-width=".5"/><circle cx="16.700" cy="10.500" r=".55" fill="#2a2a2a"/>
</svg>
<div class="thumb" style="left:651px;top:255.500px;width:19px;height:12.500px"></div>

<!-- layer names -->
<div class="t" style="left:673.500px;top:112px;font-size:7px;color:#ececec"><i>组</i> 1</div>
<div class="t" style="left:685px;top:132.900px;font-size:6.800px;color:#ececec"><i>图</i><i>层</i> 2</div>
<div class="t" style="left:685px;top:157.600px;font-size:6.800px;color:#f6f6f6"><i>图</i><i>层</i><i>二</i></div>
<div class="t" style="left:685px;top:182.800px;font-size:6.800px;color:#ececec"><i>图</i><i>层</i> 2</div>
<div class="t" style="left:685px;top:208.400px;font-size:6.800px;color:#ececec"><i>背</i><i>景</i></div>
<div class="t" style="left:685px;top:233.500px;font-size:6.800px;color:#ececec"><i>图</i><i>层</i> 1</div>
<div class="t" style="left:675px;top:258.200px;font-size:6.800px;color:#ececec"><i>背</i><i>景</i></div>


<!-- watermark -->
<svg style="left:740px;top:478px" width="130" height="45" viewBox="740 478 130 45" fill="none" stroke="#3766a6" stroke-linecap="round" opacity=".8">
  <path d="M756.400 504.600a11 11 0 1 1 10 0" stroke-width="1.900"/>
  <path d="M757.200 490.400v6.200a4.200 4.200 0 0 0 8.400 0v-6.200" stroke-width="2"/>
  <path d="M756.400 507.800h10M756.400 511.200h10M758 514.400h6.800" stroke-width="2" stroke-linecap="butt"/>
  <g stroke-width="2.700">
    <path d="M784.200 489v10.400a4.800 4.800 0 0 0 9.600 0v-10.400"/>
    <path d="M801.700 489v15.200M808.900 489v15.200M816.100 489v15.200"/>
    <path d="M823.400 489v10.400a4.800 4.800 0 0 0 9.600 0v-10.400"/>
    <path d="M840.700 489v15.200M847.600 489v15.200M854.600 489v15.200"/>
  </g>
  <path d="M783 509.600h72.500" stroke-width="2.600" stroke-dasharray="3.600 4.600" stroke-linecap="butt" opacity=".85"/>
</svg>
</body>
</html>
